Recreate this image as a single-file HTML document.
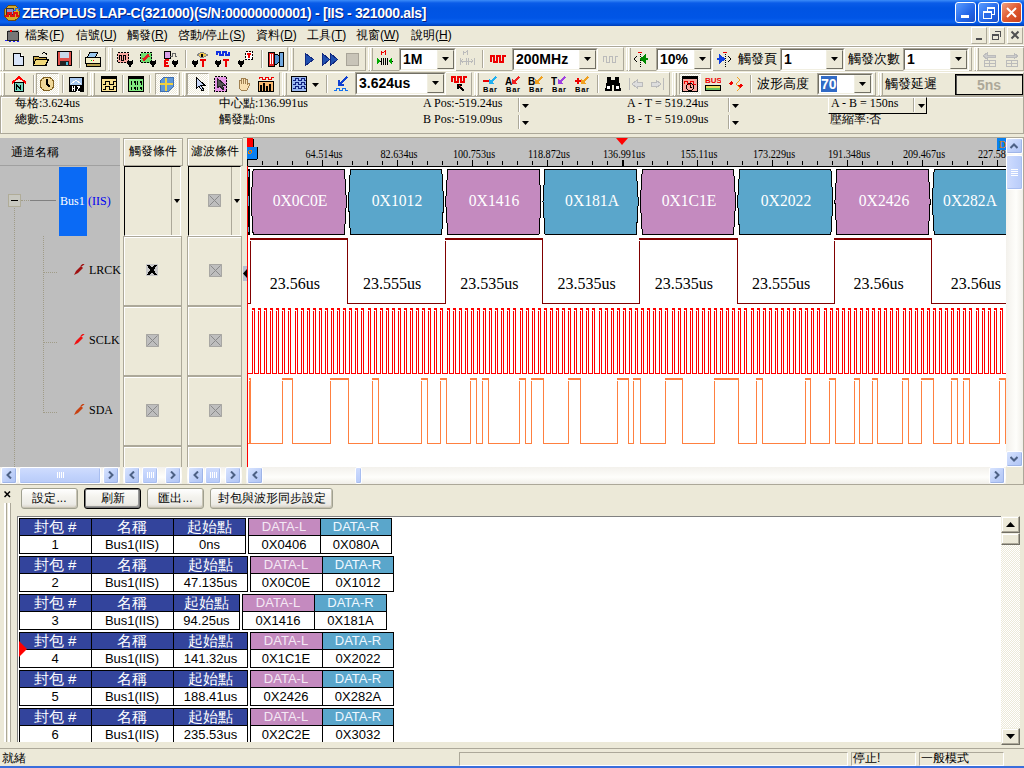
<!DOCTYPE html><html><head><meta charset="utf-8"><style>
html,body{margin:0;padding:0;width:1024px;height:768px;overflow:hidden;background:#ECE9D8;position:relative;font-family:"Liberation Sans",sans-serif;font-size:12px;color:#000}
.s{font-family:"Liberation Serif",serif}
</style></head><body>
<div style="position:absolute;left:0px;top:0px;width:1024px;height:26px;background:linear-gradient(#3C8CF8 0px,#0A5CE8 3px,#0054E3 8px,#0055E6 18px,#0A62EE 22px,#0050D8 24px,#003CB4 26px)"></div>
<svg style="position:absolute;left:3px;top:4px;" width="18" height="18" viewBox="0 0 18 18" shape-rendering="crispEdges"><circle cx="9" cy="9" r="8" fill="#D6A92A" stroke="#6B4A10"/><rect x="3" y="4" width="7" height="6" fill="#8A8FD0" stroke="#333"/><path d="M2 12h3v-3h3v3h3v-3h3v3h2" stroke="#E01010" stroke-width="2" fill="none"/><path d="M10 6h2v-2h3v2h2" stroke="#1E6AE0" fill="none"/></svg>
<div style="position:absolute;left:22px;top:5px;white-space:nowrap;color:#fff;font-weight:bold;font-size:14px;letter-spacing:-0.32px;text-shadow:1px 1px 0 #0A1E7A">ZEROPLUS LAP-C(321000)(S/N:00000000001) - [IIS - 321000.als]</div>
<div style="position:absolute;left:955px;top:2px;width:21px;height:21px;box-sizing:border-box;border:1px solid #fff;border-radius:3px;background:linear-gradient(135deg,#5A9CFF,#2366E8 60%,#1C50C8)"><div style="position:absolute;left:5px;top:12px;width:8px;height:3px;background:#fff"></div></div>
<div style="position:absolute;left:978px;top:2px;width:21px;height:21px;box-sizing:border-box;border:1px solid #fff;border-radius:3px;background:linear-gradient(135deg,#5A9CFF,#2366E8 60%,#1C50C8)"><div style="position:absolute;left:8px;top:4px;width:6px;height:5px;border:1px solid #fff;border-top-width:2px"></div><div style="position:absolute;left:4px;top:8px;width:7px;height:5px;border:1px solid #fff;border-top-width:2px;background:#2A6BE8"></div></div>
<div style="position:absolute;left:1001px;top:2px;width:21px;height:21px;box-sizing:border-box;border:1px solid #fff;border-radius:3px;background:linear-gradient(135deg,#F0A080,#E05A30 50%,#C8401C)"><svg style="position:absolute;left:4px;top:4px" width="11" height="11"><path d="M1 1L10 10M10 1L1 10" stroke="#fff" stroke-width="2"/></svg></div>
<div style="position:absolute;left:0px;top:26px;width:1024px;height:19px;background:#ECE9D8"></div>
<svg style="position:absolute;left:4px;top:28px;" width="16" height="15" viewBox="0 0 16 15" shape-rendering="crispEdges"><rect x="3" y="3" width="11" height="9" fill="#777" stroke="#222"/><path d="M4 2h10v2" stroke="#aaa"/><circle cx="7" cy="3" r="1" fill="#f00"/><path d="M1 12h2M5 13h2M9 13h2M13 13h2" stroke="#22f"/></svg>
<div style="position:absolute;left:25px;top:28px;white-space:nowrap;font-size:12px;line-height:15px">檔案(<u>F</u>)</div>
<div style="position:absolute;left:76px;top:28px;white-space:nowrap;font-size:12px;line-height:15px">信號(<u>U</u>)</div>
<div style="position:absolute;left:127px;top:28px;white-space:nowrap;font-size:12px;line-height:15px">觸發(<u>R</u>)</div>
<div style="position:absolute;left:178px;top:28px;white-space:nowrap;font-size:12px;line-height:15px">啓動/停止(<u>S</u>)</div>
<div style="position:absolute;left:256px;top:28px;white-space:nowrap;font-size:12px;line-height:15px">資料(<u>D</u>)</div>
<div style="position:absolute;left:307px;top:28px;white-space:nowrap;font-size:12px;line-height:15px">工具(<u>T</u>)</div>
<div style="position:absolute;left:356px;top:28px;white-space:nowrap;font-size:12px;line-height:15px">視窗(<u>W</u>)</div>
<div style="position:absolute;left:411px;top:28px;white-space:nowrap;font-size:12px;line-height:15px">說明(<u>H</u>)</div>
<div style="position:absolute;left:971px;top:27px;width:16px;height:17px;box-sizing:border-box;border:1px solid;border-color:#fff #ACA899 #ACA899 #fff;background:#ECE9D8"></div>
<div style="position:absolute;left:989px;top:27px;width:16px;height:17px;box-sizing:border-box;border:1px solid;border-color:#fff #ACA899 #ACA899 #fff;background:#ECE9D8"></div>
<div style="position:absolute;left:1007px;top:27px;width:16px;height:17px;box-sizing:border-box;border:1px solid;border-color:#fff #ACA899 #ACA899 #fff;background:#ECE9D8"></div>
<svg style="position:absolute;left:974px;top:30px;" width="12" height="12" viewBox="0 0 12 12" shape-rendering="crispEdges"><rect x="2" y="8" width="6" height="2" fill="#505050"/></svg>
<svg style="position:absolute;left:991px;top:30px;" width="12" height="12" viewBox="0 0 12 12" shape-rendering="crispEdges"><path d="M4.5 1.5h5v5h-1M1.5 4.5h6v5h-6z" stroke="#505050" fill="none"/><path d="M4 1.5h6M1 5h7" stroke="#505050"/></svg>
<svg style="position:absolute;left:1010px;top:30px;shape-rendering:auto" width="10" height="10" viewBox="0 0 10 10" shape-rendering="crispEdges"><path d="M1.5 1.5L8.5 8.5M8.5 1.5L1.5 8.5" stroke="#505050" stroke-width="2"/></svg>
<div style="position:absolute;left:0px;top:45px;width:1024px;height:1px;background:#fff"></div>
<div style="position:absolute;left:0px;top:46px;width:1024px;height:1px;background:#ACA899"></div>
<div style="position:absolute;left:0px;top:47px;width:106px;height:24px;box-sizing:border-box;border:1px solid;border-color:#fff #ACA899 #ACA899 #fff"></div>
<div style="position:absolute;left:2px;top:48px;width:3px;height:23px;box-sizing:border-box;border-left:1px solid #fff;border-right:1px solid #ACA899"></div>
<div style="position:absolute;left:108px;top:47px;width:180px;height:24px;box-sizing:border-box;border:1px solid;border-color:#fff #ACA899 #ACA899 #fff"></div>
<div style="position:absolute;left:110px;top:48px;width:3px;height:23px;box-sizing:border-box;border-left:1px solid #fff;border-right:1px solid #ACA899"></div>
<div style="position:absolute;left:289px;top:47px;width:77px;height:24px;box-sizing:border-box;border:1px solid;border-color:#fff #ACA899 #ACA899 #fff"></div>
<div style="position:absolute;left:291px;top:48px;width:3px;height:23px;box-sizing:border-box;border-left:1px solid #fff;border-right:1px solid #ACA899"></div>
<div style="position:absolute;left:368px;top:47px;width:256px;height:24px;box-sizing:border-box;border:1px solid;border-color:#fff #ACA899 #ACA899 #fff"></div>
<div style="position:absolute;left:370px;top:48px;width:3px;height:23px;box-sizing:border-box;border-left:1px solid #fff;border-right:1px solid #ACA899"></div>
<div style="position:absolute;left:626px;top:47px;width:346px;height:24px;box-sizing:border-box;border:1px solid;border-color:#fff #ACA899 #ACA899 #fff"></div>
<div style="position:absolute;left:628px;top:48px;width:3px;height:23px;box-sizing:border-box;border-left:1px solid #fff;border-right:1px solid #ACA899"></div>
<div style="position:absolute;left:974px;top:47px;width:50px;height:24px;box-sizing:border-box;border:1px solid;border-color:#fff #ACA899 #ACA899 #fff"></div>
<div style="position:absolute;left:976px;top:48px;width:3px;height:23px;box-sizing:border-box;border-left:1px solid #fff;border-right:1px solid #ACA899"></div>
<div style="position:absolute;left:0px;top:72px;width:88px;height:24px;box-sizing:border-box;border:1px solid;border-color:#fff #ACA899 #ACA899 #fff"></div>
<div style="position:absolute;left:2px;top:73px;width:3px;height:23px;box-sizing:border-box;border-left:1px solid #fff;border-right:1px solid #ACA899"></div>
<div style="position:absolute;left:90px;top:72px;width:90px;height:24px;box-sizing:border-box;border:1px solid;border-color:#fff #ACA899 #ACA899 #fff"></div>
<div style="position:absolute;left:92px;top:73px;width:3px;height:23px;box-sizing:border-box;border-left:1px solid #fff;border-right:1px solid #ACA899"></div>
<div style="position:absolute;left:182px;top:72px;width:98px;height:24px;box-sizing:border-box;border:1px solid;border-color:#fff #ACA899 #ACA899 #fff"></div>
<div style="position:absolute;left:184px;top:73px;width:3px;height:23px;box-sizing:border-box;border-left:1px solid #fff;border-right:1px solid #ACA899"></div>
<div style="position:absolute;left:282px;top:72px;width:190px;height:24px;box-sizing:border-box;border:1px solid;border-color:#fff #ACA899 #ACA899 #fff"></div>
<div style="position:absolute;left:284px;top:73px;width:3px;height:23px;box-sizing:border-box;border-left:1px solid #fff;border-right:1px solid #ACA899"></div>
<div style="position:absolute;left:474px;top:72px;width:196px;height:24px;box-sizing:border-box;border:1px solid;border-color:#fff #ACA899 #ACA899 #fff"></div>
<div style="position:absolute;left:476px;top:73px;width:3px;height:23px;box-sizing:border-box;border-left:1px solid #fff;border-right:1px solid #ACA899"></div>
<div style="position:absolute;left:672px;top:72px;width:204px;height:24px;box-sizing:border-box;border:1px solid;border-color:#fff #ACA899 #ACA899 #fff"></div>
<div style="position:absolute;left:674px;top:73px;width:3px;height:23px;box-sizing:border-box;border-left:1px solid #fff;border-right:1px solid #ACA899"></div>
<div style="position:absolute;left:878px;top:72px;width:146px;height:24px;box-sizing:border-box;border:1px solid;border-color:#fff #ACA899 #ACA899 #fff"></div>
<div style="position:absolute;left:880px;top:73px;width:3px;height:23px;box-sizing:border-box;border-left:1px solid #fff;border-right:1px solid #ACA899"></div>
<svg style="position:absolute;left:12px;top:53px;shape-rendering:crispEdges" width="13" height="14" viewBox="0 0 13 14" shape-rendering="crispEdges"><path d="M1.5 0.5h7l3 3v9h-10z" fill="#D8E4F8" stroke="#000"/><path d="M8.5 0.5v3h3" fill="#fff" stroke="#000"/></svg>
<svg style="position:absolute;left:33px;top:51px;shape-rendering:crispEdges" width="16" height="16" viewBox="0 0 16 16" shape-rendering="crispEdges"><path d="M0.5 5.5h5l1 1h7v8h-13z" fill="#C8A848" stroke="#000"/><path d="M2.5 8.5h13l-3 6h-12z" fill="#F0D878" stroke="#000"/><path d="M9 3q3-3 5 1" stroke="#000" fill="none"/></svg>
<svg style="position:absolute;left:57px;top:51px;shape-rendering:crispEdges" width="16" height="16" viewBox="0 0 16 16" shape-rendering="crispEdges"><rect x="0.5" y="0.5" width="14" height="14" fill="#E0504A" stroke="#000"/><rect x="3" y="1" width="9" height="6" fill="#C8D8E8"/><rect x="3" y="10" width="9" height="5" fill="#222"/><rect x="9" y="11" width="2" height="3" fill="#4AC0E0"/></svg>
<div style="position:absolute;left:79px;top:50px;width:2px;height:18px;box-sizing:border-box;border-left:1px solid #ACA899;border-right:1px solid #fff"></div>
<svg style="position:absolute;left:85px;top:51px;shape-rendering:crispEdges" width="16" height="16" viewBox="0 0 16 16" shape-rendering="crispEdges"><path d="M4.5 1.5h8l-2 5h-8z" fill="#9AC8F0" stroke="#000"/><rect x="0.5" y="6.5" width="15" height="6" fill="#F4EEC8" stroke="#000"/><rect x="1" y="12" width="14" height="3" fill="#B8A050" stroke="#000"/><rect x="6" y="9" width="1" height="1" fill="#0C0"/><rect x="8" y="9" width="1" height="1" fill="#F00"/></svg>
<svg style="position:absolute;left:117px;top:51px;shape-rendering:crispEdges" width="16" height="16" viewBox="0 0 16 16" shape-rendering="crispEdges"><rect x="0.5" y="1.5" width="11" height="10" fill="#F8A8A0" stroke="#000" stroke-dasharray="2 1"/><path d="M2 9V4h2v5h2V4h2v5" stroke="#000" fill="none"/><path d="M11 8.5v2M15 8.5v2" stroke="#000"/><path d="M10 10h6v1.5q0 2.5-3 2.5t-3-2.5z" fill="#000"/><path d="M13 13v3" stroke="#000" stroke-width="1.5"/></svg>
<svg style="position:absolute;left:140px;top:51px;shape-rendering:crispEdges" width="16" height="16" viewBox="0 0 16 16" shape-rendering="crispEdges"><rect x="0.5" y="1.5" width="11" height="10" fill="#70E070" stroke="#000" stroke-dasharray="2 1"/><path d="M3 9l6-5" stroke="#E02020" stroke-width="3"/><path d="M11 8.5v2M15 8.5v2" stroke="#000"/><path d="M10 10h6v1.5q0 2.5-3 2.5t-3-2.5z" fill="#000"/><path d="M13 13v3" stroke="#000" stroke-width="1.5"/></svg>
<svg style="position:absolute;left:162px;top:51px;shape-rendering:crispEdges" width="17" height="16" viewBox="0 0 17 16" shape-rendering="crispEdges"><rect x="2.5" y="0.5" width="6" height="7" fill="#D8A0E8" stroke="#000"/><path d="M8 5h2V2h3v3h2" stroke="#666" fill="none"/><path d="M3 9h4M3 9v6h4M3 12h3" stroke="#E00" stroke-width="1.5" fill="none"/><path d="M11 8.5v2M15 8.5v2" stroke="#000"/><path d="M10 10h6v1.5q0 2.5-3 2.5t-3-2.5z" fill="#000"/><path d="M13 13v3" stroke="#000" stroke-width="1.5"/></svg>
<div style="position:absolute;left:185px;top:50px;width:2px;height:18px;box-sizing:border-box;border-left:1px solid #ACA899;border-right:1px solid #fff"></div>
<svg style="position:absolute;left:192px;top:51px;shape-rendering:crispEdges" width="16" height="16" viewBox="0 0 16 16" shape-rendering="crispEdges"><path d="M5 4l5-3 6 3-6 3z" fill="#F0C850" stroke="#888"/><rect x="9" y="3" width="2" height="3" fill="#000"/><path d="M1 8.5v2M5 8.5v2" stroke="#000"/><path d="M0 10h6v1.5q0 2.5-3 2.5t-3-2.5z" fill="#000"/><path d="M3 13v3" stroke="#000" stroke-width="1.5"/><path d="M8 9h6M11 9v7" stroke="#E00" stroke-width="2"/></svg>
<svg style="position:absolute;left:215px;top:51px;shape-rendering:crispEdges" width="16" height="16" viewBox="0 0 16 16" shape-rendering="crispEdges"><path d="M2 4V1h3v3h3V1h3v3h3V1" stroke="#1030E0" stroke-width="1.5" fill="none"/><path d="M1 8.5v2M5 8.5v2" stroke="#000"/><path d="M0 10h6v1.5q0 2.5-3 2.5t-3-2.5z" fill="#000"/><path d="M3 13v3" stroke="#000" stroke-width="1.5"/><path d="M8 9h6M11 9v7" stroke="#E00" stroke-width="2"/></svg>
<svg style="position:absolute;left:238px;top:51px;shape-rendering:crispEdges" width="16" height="16" viewBox="0 0 16 16" shape-rendering="crispEdges"><rect x="7.5" y="0.5" width="7" height="8" fill="#fff" stroke="#000" stroke-dasharray="2 1"/><path d="M9 3h4M11 3v4" stroke="#E00" stroke-width="2"/><path d="M1 8.5v2M5 8.5v2" stroke="#000"/><path d="M0 10h6v1.5q0 2.5-3 2.5t-3-2.5z" fill="#000"/><path d="M3 13v3" stroke="#000" stroke-width="1.5"/></svg>
<div style="position:absolute;left:261px;top:50px;width:2px;height:18px;box-sizing:border-box;border-left:1px solid #ACA899;border-right:1px solid #fff"></div>
<svg style="position:absolute;left:267px;top:51px;shape-rendering:crispEdges" width="17" height="16" viewBox="0 0 17 16" shape-rendering="crispEdges"><path d="M1 1h6v14H1z" fill="#E02020" stroke="#000"/><path d="M3 3v10M5 3v10" stroke="#fff"/><path d="M7 3h3l2 2v6l-2 2H7z" fill="#5090D0" stroke="#000"/><path d="M12 1h4v14h-4z" fill="#70A8E0" stroke="#000"/></svg>
<svg style="position:absolute;left:304px;top:52px;shape-rendering:crispEdges" width="12" height="16" viewBox="0 0 12 16" shape-rendering="crispEdges"><path d="M1.5 1.5l8 6-8 6z" fill="#2050B0" stroke="#102880"/></svg>
<svg style="position:absolute;left:322px;top:52px;shape-rendering:crispEdges" width="16" height="16" viewBox="0 0 16 16" shape-rendering="crispEdges"><path d="M0.5 1.5l7 6-7 6zM8.5 1.5l7 6-7 6z" fill="#2050B0" stroke="#102880"/></svg>
<svg style="position:absolute;left:345px;top:52px;shape-rendering:crispEdges" width="14" height="16" viewBox="0 0 14 16" shape-rendering="crispEdges"><rect x="1" y="1" width="12" height="12" fill="#C8C4B8" stroke="#A8A498"/></svg>
<svg style="position:absolute;left:377px;top:50px;shape-rendering:crispEdges" width="17" height="17" viewBox="0 0 17 17" shape-rendering="crispEdges"><path d="M4 5V1l2 2 2-2v4" stroke="#E00" fill="none"/><path d="M0 11h4M4 8v7M6 8v7M8 8v7M10 8v7M16 11h-4" stroke="#000"/><path d="M0 8l4 3-4 3z" fill="#0A0"/><path d="M15 8l-4 3 4 3z" fill="#0A0"/></svg>
<div style="position:absolute;left:399px;top:48px;width:57px;height:23px;box-sizing:border-box;border:1px solid;border-color:#ACA899 #fff #fff #ACA899;background:#fff"></div>
<div style="position:absolute;left:400px;top:49px;width:55px;height:21px;box-sizing:border-box;border:1px solid;border-color:#716F64 #F1EFE2 #F1EFE2 #716F64;background:#fff"></div>
<div style="position:absolute;left:437px;top:50px;width:17px;height:19px;box-sizing:border-box;border:1px solid;border-color:#F1EFE2 #716F64 #716F64 #F1EFE2;background:#ECE9D8"></div>
<svg style="position:absolute;left:442px;top:57px;shape-rendering:auto" width="7" height="4" viewBox="0 0 7 4" shape-rendering="crispEdges"><path d="M0 0h7L3.5 4z" fill="#000"/></svg>
<div style="position:absolute;left:403px;top:51px;white-space:nowrap;font-weight:bold;font-size:14px;line-height:16px">1M</div>
<svg style="position:absolute;left:459px;top:50px;shape-rendering:crispEdges" width="17" height="17" viewBox="0 0 17 17" shape-rendering="crispEdges"><path d="M4 5V1l2 2 2-2v4" stroke="#bbb" fill="none"/><path d="M1 8v7M15 8v7M3 11h10M7 8v7M9 8v7" stroke="#bbb"/><path d="M4 9l-2 2 2 2M12 9l2 2-2 2" stroke="#bbb" fill="none"/></svg>
<div style="position:absolute;left:482px;top:50px;width:2px;height:18px;box-sizing:border-box;border-left:1px solid #ACA899;border-right:1px solid #fff"></div>
<svg style="position:absolute;left:490px;top:53px;shape-rendering:crispEdges" width="17" height="12" viewBox="0 0 17 12" shape-rendering="crispEdges"><path d="M1 9V3h3v6h3V3h3v6h3V3h3" stroke="#E00" stroke-width="1.5" fill="none"/></svg>
<div style="position:absolute;left:512px;top:48px;width:86px;height:23px;box-sizing:border-box;border:1px solid;border-color:#ACA899 #fff #fff #ACA899;background:#fff"></div>
<div style="position:absolute;left:513px;top:49px;width:84px;height:21px;box-sizing:border-box;border:1px solid;border-color:#716F64 #F1EFE2 #F1EFE2 #716F64;background:#fff"></div>
<div style="position:absolute;left:579px;top:50px;width:17px;height:19px;box-sizing:border-box;border:1px solid;border-color:#F1EFE2 #716F64 #716F64 #F1EFE2;background:#ECE9D8"></div>
<svg style="position:absolute;left:584px;top:57px;shape-rendering:auto" width="7" height="4" viewBox="0 0 7 4" shape-rendering="crispEdges"><path d="M0 0h7L3.5 4z" fill="#000"/></svg>
<div style="position:absolute;left:516px;top:51px;white-space:nowrap;font-weight:bold;font-size:14px;line-height:16px">200MHz</div>
<svg style="position:absolute;left:602px;top:53px;shape-rendering:crispEdges" width="17" height="12" viewBox="0 0 17 12" shape-rendering="crispEdges"><path d="M1 9V3h3v6h3V3h3v6h3V3h3" stroke="#bbb" fill="none"/></svg>
<svg style="position:absolute;left:633px;top:51px;shape-rendering:crispEdges" width="17" height="16" viewBox="0 0 17 16" shape-rendering="crispEdges"><path d="M7 1v15" stroke="#000" stroke-dasharray="1 1"/><path d="M5 1h4" stroke="#E00"/><path d="M15 8H9M12 5l-4 3 4 3z" fill="#0C0" stroke="#080" stroke-width="2"/><path d="M1 8l3-3M1 8l3 3" stroke="#000"/></svg>
<div style="position:absolute;left:656px;top:48px;width:57px;height:23px;box-sizing:border-box;border:1px solid;border-color:#ACA899 #fff #fff #ACA899;background:#fff"></div>
<div style="position:absolute;left:657px;top:49px;width:55px;height:21px;box-sizing:border-box;border:1px solid;border-color:#716F64 #F1EFE2 #F1EFE2 #716F64;background:#fff"></div>
<div style="position:absolute;left:694px;top:50px;width:17px;height:19px;box-sizing:border-box;border:1px solid;border-color:#F1EFE2 #716F64 #716F64 #F1EFE2;background:#ECE9D8"></div>
<svg style="position:absolute;left:699px;top:57px;shape-rendering:auto" width="7" height="4" viewBox="0 0 7 4" shape-rendering="crispEdges"><path d="M0 0h7L3.5 4z" fill="#000"/></svg>
<div style="position:absolute;left:660px;top:51px;white-space:nowrap;font-weight:bold;font-size:14px;line-height:16px">10%</div>
<svg style="position:absolute;left:716px;top:51px;shape-rendering:crispEdges" width="17" height="16" viewBox="0 0 17 16" shape-rendering="crispEdges"><path d="M9 1v15" stroke="#000" stroke-dasharray="1 1"/><path d="M7 1h4" stroke="#E00"/><path d="M1 8h6M4 5l4 3-4 3z" fill="#1040E0" stroke="#1040E0" stroke-width="2"/><path d="M15 8l-3-3M15 8l-3 3" stroke="#000"/></svg>
<div style="position:absolute;left:738px;top:50px;white-space:nowrap;font-size:13px;line-height:18px">觸發頁</div>
<div style="position:absolute;left:780px;top:48px;width:65px;height:23px;box-sizing:border-box;border:1px solid;border-color:#ACA899 #fff #fff #ACA899;background:#fff"></div>
<div style="position:absolute;left:781px;top:49px;width:63px;height:21px;box-sizing:border-box;border:1px solid;border-color:#716F64 #F1EFE2 #F1EFE2 #716F64;background:#fff"></div>
<div style="position:absolute;left:826px;top:50px;width:17px;height:19px;box-sizing:border-box;border:1px solid;border-color:#F1EFE2 #716F64 #716F64 #F1EFE2;background:#ECE9D8"></div>
<svg style="position:absolute;left:831px;top:57px;shape-rendering:auto" width="7" height="4" viewBox="0 0 7 4" shape-rendering="crispEdges"><path d="M0 0h7L3.5 4z" fill="#000"/></svg>
<div style="position:absolute;left:784px;top:51px;white-space:nowrap;font-weight:bold;font-size:14px;line-height:16px">1</div>
<div style="position:absolute;left:848px;top:50px;white-space:nowrap;font-size:13px;line-height:18px">觸發次數</div>
<div style="position:absolute;left:903px;top:48px;width:66px;height:23px;box-sizing:border-box;border:1px solid;border-color:#ACA899 #fff #fff #ACA899;background:#fff"></div>
<div style="position:absolute;left:904px;top:49px;width:64px;height:21px;box-sizing:border-box;border:1px solid;border-color:#716F64 #F1EFE2 #F1EFE2 #716F64;background:#fff"></div>
<div style="position:absolute;left:950px;top:50px;width:17px;height:19px;box-sizing:border-box;border:1px solid;border-color:#F1EFE2 #716F64 #716F64 #F1EFE2;background:#ECE9D8"></div>
<svg style="position:absolute;left:955px;top:57px;shape-rendering:auto" width="7" height="4" viewBox="0 0 7 4" shape-rendering="crispEdges"><path d="M0 0h7L3.5 4z" fill="#000"/></svg>
<div style="position:absolute;left:907px;top:51px;white-space:nowrap;font-weight:bold;font-size:14px;line-height:16px">1</div>
<svg style="position:absolute;left:981px;top:51px;shape-rendering:crispEdges" width="17" height="16" viewBox="0 0 17 16" shape-rendering="crispEdges"><path d="M3 15V9h11v6zM8.5 9v6M3 12h11" stroke="#bbb" fill="none"/><path d="M2 5l4-3v2h8v2H6v2z" fill="#ccc" stroke="#bbb"/></svg>
<svg style="position:absolute;left:1003px;top:51px;shape-rendering:crispEdges" width="17" height="16" viewBox="0 0 17 16" shape-rendering="crispEdges"><path d="M3 15V9h11v6zM8.5 9v6M3 12h11" stroke="#bbb" fill="none"/><path d="M15 5l-4-3v2H3v2h8v2z" fill="#ccc" stroke="#bbb"/></svg>
<svg style="position:absolute;left:11px;top:76px;shape-rendering:crispEdges" width="16" height="16" viewBox="0 0 16 16" shape-rendering="crispEdges"><path d="M1 7L8 1l7 6" stroke="#F00" stroke-width="2" fill="none"/><rect x="3.5" y="6.5" width="9" height="9" fill="#70D8C0" stroke="#000"/><path d="M5.5 13.5v-5l4 5v-5" stroke="#000" fill="none"/></svg>
<div style="position:absolute;left:33px;top:75px;width:2px;height:18px;box-sizing:border-box;border-left:1px solid #ACA899;border-right:1px solid #fff"></div>
<div style="position:absolute;left:36px;top:73px;width:23px;height:22px;box-sizing:border-box;border:1px solid;border-color:#ACA899 #fff #fff #ACA899;background:repeating-conic-gradient(#fff 0 25%,#ECE9D8 0 50%) 0 0/2px 2px"></div>
<svg style="position:absolute;left:39px;top:76px;shape-rendering:crispEdges" width="16" height="16" viewBox="0 0 16 16" shape-rendering="crispEdges"><circle cx="8" cy="8" r="7" fill="#F0D898" stroke="#806020"/><path d="M8 3v5l3 3" stroke="#000" stroke-width="1.5" fill="none"/></svg>
<div style="position:absolute;left:62px;top:75px;width:2px;height:18px;box-sizing:border-box;border-left:1px solid #ACA899;border-right:1px solid #fff"></div>
<svg style="position:absolute;left:68px;top:76px;shape-rendering:crispEdges" width="16" height="16" viewBox="0 0 16 16" shape-rendering="crispEdges"><rect x="0.5" y="0.5" width="15" height="15" fill="#000"/><rect x="2" y="2" width="12" height="7" fill="#A8C8F0"/><path d="M3 8l5-4 5 4" stroke="#fff" fill="none"/><path d="M4 10v5M4 12h2M6 10v5M9 10h3l-3 5h3" stroke="#fff"/></svg>
<svg style="position:absolute;left:101px;top:76px;shape-rendering:crispEdges" width="16" height="16" viewBox="0 0 16 16" shape-rendering="crispEdges"><rect x="0.5" y="0.5" width="15" height="15" fill="#F8E090" stroke="#000"/><rect x="0" y="0" width="16" height="3" fill="#000"/><path d="M2 8h2V5h4v3h4V5h3M2 13h2v-3h4v3h4v-3h3" stroke="#000" fill="none"/></svg>
<div style="position:absolute;left:122px;top:75px;width:2px;height:18px;box-sizing:border-box;border-left:1px solid #ACA899;border-right:1px solid #fff"></div>
<svg style="position:absolute;left:128px;top:76px;shape-rendering:crispEdges" width="16" height="16" viewBox="0 0 16 16" shape-rendering="crispEdges"><rect x="0.5" y="0.5" width="15" height="15" fill="#80E880" stroke="#000"/><rect x="0" y="0" width="16" height="3" fill="#000"/><path d="M3 5v4M6 5h1v4M9 5v4M12 5h1v4M3 11v3M6 11h1v3M9 11v3M12 11h1v3" stroke="#000"/></svg>
<div style="position:absolute;left:149px;top:75px;width:2px;height:18px;box-sizing:border-box;border-left:1px solid #ACA899;border-right:1px solid #fff"></div>
<div style="position:absolute;left:155px;top:73px;width:23px;height:22px;box-sizing:border-box;border:1px solid;border-color:#ACA899 #fff #fff #ACA899;background:repeating-conic-gradient(#fff 0 25%,#ECE9D8 0 50%) 0 0/2px 2px"></div>
<svg style="position:absolute;left:158px;top:76px;shape-rendering:crispEdges" width="16" height="16" viewBox="0 0 16 16" shape-rendering="crispEdges"><path d="M2 5l4-4h9v10l-4 4H2z" fill="#6098D8" stroke="#4070B0"/><path d="M8 2v13M2 8h13" stroke="#F0D040" stroke-width="2"/></svg>
<div style="position:absolute;left:187px;top:73px;width:22px;height:22px;box-sizing:border-box;border:1px solid;border-color:#ACA899 #fff #fff #ACA899;background:repeating-conic-gradient(#fff 0 25%,#ECE9D8 0 50%) 0 0/2px 2px"></div>
<svg style="position:absolute;left:193px;top:76px;shape-rendering:crispEdges" width="16" height="16" viewBox="0 0 16 16" shape-rendering="crispEdges"><path d="M3.5 1.5v11l2.5-2.5 3 5 2-1-3-4.5h4z" fill="#C8D8F8" stroke="#000"/></svg>
<svg style="position:absolute;left:213px;top:76px;shape-rendering:crispEdges" width="16" height="16" viewBox="0 0 16 16" shape-rendering="crispEdges"><rect x="1.5" y="0.5" width="12" height="15" fill="#E898E8" stroke="#000" stroke-dasharray="2 1"/><path d="M4 2v10l3-2 3 4 1-1-2-4h3z" fill="#555" stroke="#222"/></svg>
<svg style="position:absolute;left:236px;top:76px;shape-rendering:crispEdges" width="16" height="16" viewBox="0 0 16 16" shape-rendering="crispEdges"><path d="M3 8V4h2v4V2h2v6V2h2v6V3h2v6l2-2 1 1-3 6H5L3 12z" fill="#F8E0B0" stroke="#A08050"/></svg>
<svg style="position:absolute;left:258px;top:76px;shape-rendering:crispEdges" width="16" height="16" viewBox="0 0 16 16" shape-rendering="crispEdges"><path d="M1 3V1h3v2h3V1h3v2h3V1h3" stroke="#E00" fill="none"/><rect x="0.5" y="5.5" width="15" height="10" fill="#F8B870" stroke="#000"/><path d="M3 15V9M6 15V7M9 15v-5M12 15V8" stroke="#000" stroke-width="1.5"/></svg>
<svg style="position:absolute;left:291px;top:76px;shape-rendering:crispEdges" width="16" height="16" viewBox="0 0 16 16" shape-rendering="crispEdges"><rect x="0.5" y="0.5" width="15" height="15" fill="#9AB8F0" stroke="#000"/><path d="M2 4h2V2h3v2h3V2h3v2h2M2 8h2V6h3v2h3V6h3v2h2M2 12h2v-2h3v2h3v-2h3v2h2" stroke="#102080" fill="none"/></svg>
<svg style="position:absolute;left:312px;top:83px;shape-rendering:auto" width="7" height="4" viewBox="0 0 7 4" shape-rendering="crispEdges"><path d="M0 0h7L3.5 4z" fill="#000"/></svg>
<div style="position:absolute;left:326px;top:75px;width:2px;height:18px;box-sizing:border-box;border-left:1px solid #ACA899;border-right:1px solid #fff"></div>
<svg style="position:absolute;left:333px;top:76px;shape-rendering:crispEdges" width="16" height="16" viewBox="0 0 16 16" shape-rendering="crispEdges"><path d="M14 1L6 9M6 4v5h5" stroke="#1040D0" stroke-width="2" fill="none"/><path d="M1 14h2v-2h3v2h3v-2h3v2h3" stroke="#1070F0" fill="none"/></svg>
<div style="position:absolute;left:355px;top:72px;width:91px;height:23px;box-sizing:border-box;border:1px solid;border-color:#ACA899 #fff #fff #ACA899;background:#fff"></div>
<div style="position:absolute;left:356px;top:73px;width:89px;height:21px;box-sizing:border-box;border:1px solid;border-color:#716F64 #F1EFE2 #F1EFE2 #716F64;background:#fff"></div>
<div style="position:absolute;left:427px;top:74px;width:17px;height:19px;box-sizing:border-box;border:1px solid;border-color:#F1EFE2 #716F64 #716F64 #F1EFE2;background:#ECE9D8"></div>
<svg style="position:absolute;left:432px;top:81px;shape-rendering:auto" width="7" height="4" viewBox="0 0 7 4" shape-rendering="crispEdges"><path d="M0 0h7L3.5 4z" fill="#000"/></svg>
<div style="position:absolute;left:359px;top:75px;white-space:nowrap;font-weight:bold;font-size:14px;line-height:16px">3.624us</div>
<svg style="position:absolute;left:451px;top:76px;shape-rendering:crispEdges" width="16" height="16" viewBox="0 0 16 16" shape-rendering="crispEdges"><path d="M1 6V1h3v5h3V1h3v5h3V1h3" stroke="#E00" stroke-width="1.5" fill="none"/><path d="M13 15L7 9M7 13V9h4" stroke="#000" stroke-width="2" fill="none"/><path d="M8 9l2 2" stroke="#E00"/></svg>
<svg style="position:absolute;left:482px;top:76px;shape-rendering:crispEdges" width="16" height="17" viewBox="0 0 16 17" shape-rendering="crispEdges"><path d="M1 5h6" stroke="#E00" stroke-width="2"/><path d="M14 1L8.5 6.5" stroke="#20B0F0" stroke-width="2.2"/><path d="M7 3v5h5z" fill="#20B0F0"/><text x="1" y="16" font-family="Liberation Sans" font-weight="bold" font-size="7.5" fill="#000" textLength="14">Bar</text></svg>
<svg style="position:absolute;left:505px;top:76px;shape-rendering:crispEdges" width="16" height="17" viewBox="0 0 16 17" shape-rendering="crispEdges"><text x="0" y="9" font-family="Liberation Sans" font-weight="bold" font-size="10" fill="#000">A</text><path d="M14 1L8.5 6.5" stroke="#F02020" stroke-width="2.2"/><path d="M7 3v5h5z" fill="#F02020"/><text x="1" y="16" font-family="Liberation Sans" font-weight="bold" font-size="7.5" fill="#000" textLength="14">Bar</text></svg>
<svg style="position:absolute;left:528px;top:76px;shape-rendering:crispEdges" width="16" height="17" viewBox="0 0 16 17" shape-rendering="crispEdges"><text x="0" y="9" font-family="Liberation Sans" font-weight="bold" font-size="10" fill="#000">B</text><path d="M14 1L8.5 6.5" stroke="#F0A020" stroke-width="2.2"/><path d="M7 3v5h5z" fill="#F0A020"/><text x="1" y="16" font-family="Liberation Sans" font-weight="bold" font-size="7.5" fill="#000" textLength="14">Bar</text></svg>
<svg style="position:absolute;left:551px;top:76px;shape-rendering:crispEdges" width="16" height="17" viewBox="0 0 16 17" shape-rendering="crispEdges"><text x="0" y="9" font-family="Liberation Sans" font-weight="bold" font-size="10" fill="#000">T</text><path d="M14 1L8.5 6.5" stroke="#A040E0" stroke-width="2.2"/><path d="M7 3v5h5z" fill="#A040E0"/><text x="1" y="16" font-family="Liberation Sans" font-weight="bold" font-size="7.5" fill="#000" textLength="14">Bar</text></svg>
<svg style="position:absolute;left:574px;top:76px;shape-rendering:crispEdges" width="16" height="17" viewBox="0 0 16 17" shape-rendering="crispEdges"><path d="M1 5h6M4 2v6" stroke="#E00" stroke-width="2"/><path d="M14 1L8.5 6.5" stroke="#F0A020" stroke-width="2.2"/><path d="M7 3v5h5z" fill="#F0A020"/><text x="1" y="16" font-family="Liberation Sans" font-weight="bold" font-size="7.5" fill="#000" textLength="14">Bar</text></svg>
<div style="position:absolute;left:597px;top:75px;width:2px;height:18px;box-sizing:border-box;border-left:1px solid #ACA899;border-right:1px solid #fff"></div>
<svg style="position:absolute;left:605px;top:76px;shape-rendering:crispEdges" width="16" height="16" viewBox="0 0 16 16" shape-rendering="crispEdges"><path d="M2 1h4v3h4V1h4v3l2 11H9V9H7v6H0L2 4z" fill="#000"/><rect x="2" y="10" width="3" height="3" fill="#fff"/><rect x="11" y="10" width="3" height="3" fill="#fff"/></svg>
<svg style="position:absolute;left:628px;top:76px;shape-rendering:crispEdges" width="15" height="16" viewBox="0 0 15 16" shape-rendering="crispEdges"><path d="M1.5 2v12" stroke="#bbb"/><path d="M4 8l5-4v2h5v4H9v2z" fill="#ddd" stroke="#bbb"/></svg>
<svg style="position:absolute;left:650px;top:76px;shape-rendering:crispEdges" width="15" height="16" viewBox="0 0 15 16" shape-rendering="crispEdges"><path d="M13.5 2v12" stroke="#bbb"/><path d="M11 8L6 4v2H1v4h5v2z" fill="#ddd" stroke="#bbb"/></svg>
<div style="position:absolute;left:679px;top:73px;width:22px;height:22px;box-sizing:border-box;border:1px solid;border-color:#ACA899 #fff #fff #ACA899;background:repeating-conic-gradient(#fff 0 25%,#ECE9D8 0 50%) 0 0/2px 2px"></div>
<svg style="position:absolute;left:682px;top:76px;shape-rendering:crispEdges" width="16" height="16" viewBox="0 0 16 16" shape-rendering="crispEdges"><rect x="0.5" y="0.5" width="15" height="15" fill="#F8A8A0" stroke="#000"/><rect x="0" y="0" width="16" height="3" fill="#000"/><path d="M2 8V5h3v3h3V5h3v3h3" stroke="#E00" fill="none"/><circle cx="8" cy="11" r="3.5" fill="none" stroke="#000"/><path d="M8 9v2h2" stroke="#000" fill="none"/></svg>
<svg style="position:absolute;left:705px;top:76px;shape-rendering:crispEdges" width="16" height="16" viewBox="0 0 16 16" shape-rendering="crispEdges"><text x="0" y="7" font-family="Liberation Sans" font-weight="bold" font-size="8" fill="#E00">BUS</text><rect x="0.5" y="9.5" width="15" height="5" fill="#F0E060" stroke="#000"/><rect x="1" y="12" width="14" height="2" fill="#60C060"/></svg>
<svg style="position:absolute;left:728px;top:76px;shape-rendering:crispEdges" width="16" height="16" viewBox="0 0 16 16" shape-rendering="crispEdges"><path d="M9 1l3 3-4 4 4 4-3 3" stroke="#F0A020" fill="none"/><path d="M1 7l2-2 2 2-2 3zM10 9l3-1 2 1-3 3z" fill="#E00"/></svg>
<div style="position:absolute;left:750px;top:75px;width:2px;height:18px;box-sizing:border-box;border-left:1px solid #ACA899;border-right:1px solid #fff"></div>
<div style="position:absolute;left:757px;top:75px;white-space:nowrap;font-size:13px;line-height:18px">波形高度</div>
<div style="position:absolute;left:817px;top:73px;width:56px;height:22px;box-sizing:border-box;border:1px solid;border-color:#ACA899 #fff #fff #ACA899;background:#fff"></div>
<div style="position:absolute;left:818px;top:74px;width:54px;height:20px;box-sizing:border-box;border:1px solid;border-color:#716F64 #F1EFE2 #F1EFE2 #716F64;background:#fff"></div>
<div style="position:absolute;left:854px;top:75px;width:17px;height:18px;box-sizing:border-box;border:1px solid;border-color:#F1EFE2 #716F64 #716F64 #F1EFE2;background:#ECE9D8"></div>
<svg style="position:absolute;left:859px;top:82px;shape-rendering:auto" width="7" height="4" viewBox="0 0 7 4" shape-rendering="crispEdges"><path d="M0 0h7L3.5 4z" fill="#000"/></svg>
<div style="position:absolute;left:821px;top:76px;white-space:nowrap;font-weight:bold;font-size:14px;line-height:16px"><span style="background:#316AC5;color:#fff">70</span></div>
<div style="position:absolute;left:885px;top:75px;white-space:nowrap;font-size:13px;line-height:18px">觸發延遲</div>
<div style="position:absolute;left:955px;top:74px;width:68px;height:21px;box-sizing:border-box;border:1px solid #000;box-shadow:inset 1px 1px 0 #555;background:#ECE9D8"></div>
<div style="position:absolute;left:955px;top:75px;white-space:nowrap;width:68px;text-align:center;font-weight:bold;font-size:14px;line-height:20px;color:#ACA899">5ns</div>
<div style="position:absolute;left:0px;top:96px;width:1024px;height:38px;box-sizing:border-box;border:1px solid;border-color:#ACA899 #ACA899 #ACA899 #ACA899;box-shadow:inset 1px 1px 0 #fff"></div>
<div style="position:absolute;left:15px;top:96px;white-space:nowrap;font-family:'Liberation Serif',serif;font-size:12px;line-height:15px">每格:3.624us</div>
<div style="position:absolute;left:15px;top:112px;white-space:nowrap;font-family:'Liberation Serif',serif;font-size:12px;line-height:15px">總數:5.243ms</div>
<div style="position:absolute;left:219px;top:96px;white-space:nowrap;font-family:'Liberation Serif',serif;font-size:12px;line-height:15px">中心點:136.991us</div>
<div style="position:absolute;left:219px;top:112px;white-space:nowrap;font-family:'Liberation Serif',serif;font-size:12px;line-height:15px">觸發點:0ns</div>
<div style="position:absolute;left:423px;top:96px;white-space:nowrap;font-family:'Liberation Serif',serif;font-size:12px;line-height:15px">A Pos:-519.24us</div>
<div style="position:absolute;left:423px;top:112px;white-space:nowrap;font-family:'Liberation Serif',serif;font-size:12px;line-height:15px">B Pos:-519.09us</div>
<div style="position:absolute;left:627px;top:96px;white-space:nowrap;font-family:'Liberation Serif',serif;font-size:12px;line-height:15px">A - T = 519.24us</div>
<div style="position:absolute;left:627px;top:112px;white-space:nowrap;font-family:'Liberation Serif',serif;font-size:12px;line-height:15px">B - T = 519.09us</div>
<div style="position:absolute;left:518px;top:98px;width:2px;height:14px;box-sizing:border-box;border-left:1px solid #ACA899;border-right:1px solid #fff"></div>
<div style="position:absolute;left:518px;top:115px;width:2px;height:14px;box-sizing:border-box;border-left:1px solid #ACA899;border-right:1px solid #fff"></div>
<svg style="position:absolute;left:522px;top:104px;shape-rendering:auto" width="7" height="4" viewBox="0 0 7 4" shape-rendering="crispEdges"><path d="M0 0h7L3.5 4z"/></svg>
<svg style="position:absolute;left:522px;top:121px;shape-rendering:auto" width="7" height="4" viewBox="0 0 7 4" shape-rendering="crispEdges"><path d="M0 0h7L3.5 4z"/></svg>
<div style="position:absolute;left:728px;top:98px;width:2px;height:14px;box-sizing:border-box;border-left:1px solid #ACA899;border-right:1px solid #fff"></div>
<div style="position:absolute;left:728px;top:115px;width:2px;height:14px;box-sizing:border-box;border-left:1px solid #ACA899;border-right:1px solid #fff"></div>
<svg style="position:absolute;left:732px;top:104px;shape-rendering:auto" width="7" height="4" viewBox="0 0 7 4" shape-rendering="crispEdges"><path d="M0 0h7L3.5 4z"/></svg>
<svg style="position:absolute;left:732px;top:121px;shape-rendering:auto" width="7" height="4" viewBox="0 0 7 4" shape-rendering="crispEdges"><path d="M0 0h7L3.5 4z"/></svg>
<div style="position:absolute;left:828px;top:97px;width:99px;height:17px;box-sizing:border-box;border:1px solid;border-color:#fff #000 #000 #fff"></div>
<div style="position:absolute;left:913px;top:98px;width:2px;height:14px;box-sizing:border-box;border-left:1px solid #ACA899;border-right:1px solid #fff"></div>
<svg style="position:absolute;left:918px;top:104px;shape-rendering:auto" width="7" height="4" viewBox="0 0 7 4" shape-rendering="crispEdges"><path d="M0 0h7L3.5 4z"/></svg>
<div style="position:absolute;left:831px;top:96px;white-space:nowrap;font-family:'Liberation Serif',serif;font-size:12px;line-height:15px">A - B = 150ns</div>
<div style="position:absolute;left:830px;top:112px;white-space:nowrap;font-family:'Liberation Serif',serif;font-size:12px;line-height:15px">壓縮率:否</div>
<div style="position:absolute;left:0px;top:138px;width:120px;height:329px;background:#BEBEBE"></div>
<div style="position:absolute;left:0px;top:165px;width:120px;height:1px;background:#A0A0A0"></div>
<div style="position:absolute;left:11px;top:144px;white-space:nowrap;font-size:12px;line-height:16px">通道名稱</div>
<div style="position:absolute;left:14px;top:206px;width:1px;height:261px;border-left:1px dotted #A09C88"></div>
<div style="position:absolute;left:43px;top:236px;width:1px;height:175px;border-left:1px dotted #A09C88"></div>
<div style="position:absolute;left:43px;top:272px;width:14px;height:1px;border-top:1px dotted #A09C88"></div>
<div style="position:absolute;left:43px;top:342px;width:14px;height:1px;border-top:1px dotted #A09C88"></div>
<div style="position:absolute;left:43px;top:412px;width:14px;height:1px;border-top:1px dotted #A09C88"></div>
<div style="position:absolute;left:21px;top:200px;width:8px;height:1px;border-top:1px dotted #A09C88"></div>
<div style="position:absolute;left:8px;top:194px;width:13px;height:13px;box-sizing:border-box;border:1px solid #B0AC98;background:#C8C8C0"></div>
<div style="position:absolute;left:11px;top:200px;width:7px;height:1px;background:#000"></div>
<div style="position:absolute;left:30px;top:200px;width:26px;height:1px;background:#808080"></div>
<div style="position:absolute;left:59px;top:167px;width:28px;height:69px;background:#0A6AF5"></div>
<div style="position:absolute;left:60px;top:193px;white-space:nowrap;font-family:'Liberation Serif',serif;font-size:12px;color:#fff;line-height:16px">Bus1</div>
<div style="position:absolute;left:88px;top:193px;white-space:nowrap;font-family:'Liberation Serif',serif;font-size:12px;color:#0000F0;line-height:16px">(IIS)</div>
<svg style="position:absolute;left:73px;top:264px;shape-rendering:auto" width="12" height="12" viewBox="0 0 12 12" shape-rendering="crispEdges"><path d="M1 11l2-4 5-5 2 2-5 5z" fill="#A01010"/><path d="M8 2l3-2" stroke="#A01010" stroke-width="1.5"/></svg>
<div style="position:absolute;left:89px;top:262px;white-space:nowrap;font-family:'Liberation Serif',serif;font-size:12px;line-height:16px">LRCK</div>
<svg style="position:absolute;left:73px;top:334px;shape-rendering:auto" width="12" height="12" viewBox="0 0 12 12" shape-rendering="crispEdges"><path d="M1 11l2-4 5-5 2 2-5 5z" fill="#F01010"/><path d="M8 2l3-2" stroke="#F01010" stroke-width="1.5"/></svg>
<div style="position:absolute;left:89px;top:332px;white-space:nowrap;font-family:'Liberation Serif',serif;font-size:12px;line-height:16px">SCLK</div>
<svg style="position:absolute;left:73px;top:404px;shape-rendering:auto" width="12" height="12" viewBox="0 0 12 12" shape-rendering="crispEdges"><path d="M1 11l2-4 5-5 2 2-5 5z" fill="#C84010"/><path d="M8 2l3-2" stroke="#C84010" stroke-width="1.5"/></svg>
<div style="position:absolute;left:89px;top:402px;white-space:nowrap;font-family:'Liberation Serif',serif;font-size:12px;line-height:16px">SDA</div>
<div style="position:absolute;left:123px;top:138px;width:60px;height:28px;box-sizing:border-box;border:1px solid #ACA899;border-right-color:#ACA899;box-shadow:inset 1px 1px 0 #fff"></div>
<div style="position:absolute;left:123px;top:143px;white-space:nowrap;width:60px;text-align:center;font-size:12px;line-height:16px">觸發條件</div>
<div style="position:absolute;left:187px;top:138px;width:56px;height:28px;box-sizing:border-box;border:1px solid #ACA899;border-right-color:#ACA899;box-shadow:inset 1px 1px 0 #fff"></div>
<div style="position:absolute;left:187px;top:143px;white-space:nowrap;width:56px;text-align:center;font-size:12px;line-height:16px">濾波條件</div>
<div style="position:absolute;left:124px;top:166px;width:57px;height:70px;box-sizing:border-box;border:1px solid;border-color:#000 #fff #fff #000;background:#ECE9D8"></div>
<div style="position:absolute;left:171px;top:167px;width:1px;height:68px;background:#ACA899"></div>
<svg style="position:absolute;left:174px;top:199px;shape-rendering:auto" width="6" height="4" viewBox="0 0 6 4" shape-rendering="crispEdges"><path d="M0 0h6L3 4z"/></svg>
<div style="position:absolute;left:123px;top:236px;width:59px;height:70px;box-sizing:border-box;border:1px solid #ACA899;box-shadow:inset 1px 1px 0 #fff"></div>
<div style="position:absolute;left:123px;top:306px;width:59px;height:70px;box-sizing:border-box;border:1px solid #ACA899;box-shadow:inset 1px 1px 0 #fff"></div>
<div style="position:absolute;left:123px;top:376px;width:59px;height:70px;box-sizing:border-box;border:1px solid #ACA899;box-shadow:inset 1px 1px 0 #fff"></div>
<div style="position:absolute;left:123px;top:446px;width:59px;height:21px;box-sizing:border-box;border:1px solid #ACA899;box-shadow:inset 1px 1px 0 #fff;border-bottom:0"></div>
<div style="position:absolute;left:188px;top:166px;width:53px;height:70px;box-sizing:border-box;border:1px solid;border-color:#000 #fff #fff #000;background:#ECE9D8"></div>
<div style="position:absolute;left:231px;top:167px;width:1px;height:68px;background:#ACA899"></div>
<svg style="position:absolute;left:234px;top:199px;shape-rendering:auto" width="6" height="4" viewBox="0 0 6 4" shape-rendering="crispEdges"><path d="M0 0h6L3 4z"/></svg>
<div style="position:absolute;left:187px;top:236px;width:55px;height:70px;box-sizing:border-box;border:1px solid #ACA899;box-shadow:inset 1px 1px 0 #fff"></div>
<div style="position:absolute;left:187px;top:306px;width:55px;height:70px;box-sizing:border-box;border:1px solid #ACA899;box-shadow:inset 1px 1px 0 #fff"></div>
<div style="position:absolute;left:187px;top:376px;width:55px;height:70px;box-sizing:border-box;border:1px solid #ACA899;box-shadow:inset 1px 1px 0 #fff"></div>
<div style="position:absolute;left:187px;top:446px;width:55px;height:21px;box-sizing:border-box;border:1px solid #ACA899;box-shadow:inset 1px 1px 0 #fff;border-bottom:0"></div>
<svg style="position:absolute;left:208px;top:194px;shape-rendering:auto" width="13" height="13" viewBox="0 0 13 13" shape-rendering="crispEdges"><rect x="0.5" y="0.5" width="12" height="12" fill="#BEBEBE" stroke="#7A7A7A" stroke-dasharray="1 1"/><path d="M1.5 1.5L11.5 11.5M11.5 1.5L1.5 11.5" stroke="#8A8A8A"/></svg>
<svg style="position:absolute;left:146px;top:264px;" width="12" height="12" viewBox="0 0 12 12" shape-rendering="crispEdges"><rect x="0" y="0" width="12" height="12" fill="#C8C8C8"/><path d="M1 1h3l2 3 2-3h3l-3 5 3 5H8L6 8l-2 3H1l3-5z" fill="#000"/></svg>
<svg style="position:absolute;left:209px;top:264px;shape-rendering:auto" width="13" height="13" viewBox="0 0 13 13" shape-rendering="crispEdges"><rect x="0.5" y="0.5" width="12" height="12" fill="#BEBEBE" stroke="#7A7A7A" stroke-dasharray="1 1"/><path d="M1.5 1.5L11.5 11.5M11.5 1.5L1.5 11.5" stroke="#8A8A8A"/></svg>
<svg style="position:absolute;left:146px;top:334px;shape-rendering:auto" width="13" height="13" viewBox="0 0 13 13" shape-rendering="crispEdges"><rect x="0.5" y="0.5" width="12" height="12" fill="#BEBEBE" stroke="#7A7A7A" stroke-dasharray="1 1"/><path d="M1.5 1.5L11.5 11.5M11.5 1.5L1.5 11.5" stroke="#8A8A8A"/></svg>
<svg style="position:absolute;left:209px;top:334px;shape-rendering:auto" width="13" height="13" viewBox="0 0 13 13" shape-rendering="crispEdges"><rect x="0.5" y="0.5" width="12" height="12" fill="#BEBEBE" stroke="#7A7A7A" stroke-dasharray="1 1"/><path d="M1.5 1.5L11.5 11.5M11.5 1.5L1.5 11.5" stroke="#8A8A8A"/></svg>
<svg style="position:absolute;left:146px;top:404px;shape-rendering:auto" width="13" height="13" viewBox="0 0 13 13" shape-rendering="crispEdges"><rect x="0.5" y="0.5" width="12" height="12" fill="#BEBEBE" stroke="#7A7A7A" stroke-dasharray="1 1"/><path d="M1.5 1.5L11.5 11.5M11.5 1.5L1.5 11.5" stroke="#8A8A8A"/></svg>
<svg style="position:absolute;left:209px;top:404px;shape-rendering:auto" width="13" height="13" viewBox="0 0 13 13" shape-rendering="crispEdges"><rect x="0.5" y="0.5" width="12" height="12" fill="#BEBEBE" stroke="#7A7A7A" stroke-dasharray="1 1"/><path d="M1.5 1.5L11.5 11.5M11.5 1.5L1.5 11.5" stroke="#8A8A8A"/></svg>
<div style="position:absolute;left:243px;top:138px;width:4px;height:329px;background:#ECE9D8"></div>
<div style="position:absolute;left:247px;top:138px;width:759px;height:329px;background:#fff;overflow:hidden"></div>
<div style="position:absolute;left:247px;top:138px;width:759px;height:28px;background:#C0C0C0"></div>
<div style="position:absolute;left:247px;top:166px;width:759px;height:1px;background:#000"></div>
<svg style="position:absolute;left:247px;top:138px;" width="759" height="28" viewBox="0 0 759 28" shape-rendering="crispEdges"><rect x="0" y="22" width="1" height="6" fill="#000"/><rect x="15" y="23" width="1" height="4" fill="#000"/><rect x="30" y="23" width="1" height="4" fill="#000"/><rect x="45" y="23" width="1" height="4" fill="#000"/><rect x="60" y="23" width="1" height="4" fill="#000"/><rect x="75" y="22" width="1" height="6" fill="#000"/><rect x="90" y="23" width="1" height="4" fill="#000"/><rect x="105" y="23" width="1" height="4" fill="#000"/><rect x="120" y="23" width="1" height="4" fill="#000"/><rect x="135" y="23" width="1" height="4" fill="#000"/><rect x="150" y="22" width="1" height="6" fill="#000"/><rect x="165" y="23" width="1" height="4" fill="#000"/><rect x="180" y="23" width="1" height="4" fill="#000"/><rect x="195" y="23" width="1" height="4" fill="#000"/><rect x="210" y="23" width="1" height="4" fill="#000"/><rect x="225" y="22" width="1" height="6" fill="#000"/><rect x="240" y="23" width="1" height="4" fill="#000"/><rect x="255" y="23" width="1" height="4" fill="#000"/><rect x="270" y="23" width="1" height="4" fill="#000"/><rect x="285" y="23" width="1" height="4" fill="#000"/><rect x="300" y="22" width="1" height="6" fill="#000"/><rect x="315" y="23" width="1" height="4" fill="#000"/><rect x="330" y="23" width="1" height="4" fill="#000"/><rect x="345" y="23" width="1" height="4" fill="#000"/><rect x="360" y="23" width="1" height="4" fill="#000"/><rect x="375" y="22" width="2" height="6" fill="#000"/><rect x="390" y="23" width="1" height="4" fill="#000"/><rect x="405" y="23" width="1" height="4" fill="#000"/><rect x="420" y="23" width="1" height="4" fill="#000"/><rect x="435" y="23" width="1" height="4" fill="#000"/><rect x="450" y="22" width="1" height="6" fill="#000"/><rect x="465" y="23" width="1" height="4" fill="#000"/><rect x="480" y="23" width="1" height="4" fill="#000"/><rect x="495" y="23" width="1" height="4" fill="#000"/><rect x="510" y="23" width="1" height="4" fill="#000"/><rect x="525" y="22" width="1" height="6" fill="#000"/><rect x="540" y="23" width="1" height="4" fill="#000"/><rect x="555" y="23" width="1" height="4" fill="#000"/><rect x="570" y="23" width="1" height="4" fill="#000"/><rect x="585" y="23" width="1" height="4" fill="#000"/><rect x="600" y="22" width="1" height="6" fill="#000"/><rect x="615" y="23" width="1" height="4" fill="#000"/><rect x="630" y="23" width="1" height="4" fill="#000"/><rect x="645" y="23" width="1" height="4" fill="#000"/><rect x="660" y="23" width="1" height="4" fill="#000"/><rect x="675" y="22" width="1" height="6" fill="#000"/><rect x="690" y="23" width="1" height="4" fill="#000"/><rect x="705" y="23" width="1" height="4" fill="#000"/><rect x="720" y="23" width="1" height="4" fill="#000"/><rect x="735" y="23" width="1" height="4" fill="#000"/><rect x="750" y="22" width="1" height="6" fill="#000"/></svg>
<div style="position:absolute;left:247px;top:138px;width:759px;height:28px;overflow:hidden">
<div style="position:absolute;left:37.2px;top:9px;width:80px;text-align:center;font-family:'Liberation Serif',serif;font-size:12px;line-height:14px;transform:scaleX(0.85)">64.514us</div>
<div style="position:absolute;left:112.2px;top:9px;width:80px;text-align:center;font-family:'Liberation Serif',serif;font-size:12px;line-height:14px;transform:scaleX(0.85)">82.634us</div>
<div style="position:absolute;left:187.2px;top:9px;width:80px;text-align:center;font-family:'Liberation Serif',serif;font-size:12px;line-height:14px;transform:scaleX(0.85)">100.753us</div>
<div style="position:absolute;left:262.2px;top:9px;width:80px;text-align:center;font-family:'Liberation Serif',serif;font-size:12px;line-height:14px;transform:scaleX(0.85)">118.872us</div>
<div style="position:absolute;left:337.2px;top:9px;width:80px;text-align:center;font-family:'Liberation Serif',serif;font-size:12px;line-height:14px;transform:scaleX(0.85)">136.991us</div>
<div style="position:absolute;left:412.2px;top:9px;width:80px;text-align:center;font-family:'Liberation Serif',serif;font-size:12px;line-height:14px;transform:scaleX(0.85)">155.11us</div>
<div style="position:absolute;left:487.2px;top:9px;width:80px;text-align:center;font-family:'Liberation Serif',serif;font-size:12px;line-height:14px;transform:scaleX(0.85)">173.229us</div>
<div style="position:absolute;left:562.2px;top:9px;width:80px;text-align:center;font-family:'Liberation Serif',serif;font-size:12px;line-height:14px;transform:scaleX(0.85)">191.348us</div>
<div style="position:absolute;left:637.2px;top:9px;width:80px;text-align:center;font-family:'Liberation Serif',serif;font-size:12px;line-height:14px;transform:scaleX(0.85)">209.467us</div>
<div style="position:absolute;left:712.2px;top:9px;width:80px;text-align:center;font-family:'Liberation Serif',serif;font-size:12px;line-height:14px;transform:scaleX(0.85)">227.586us</div>
</div>
<svg style="position:absolute;left:247px;top:138px;" width="12" height="22" viewBox="0 0 12 22" shape-rendering="crispEdges"><rect x="0" y="0" width="6" height="13" fill="#F00"/><rect x="6" y="1" width="1" height="12" fill="#000"/><rect x="0" y="9" width="10" height="12" fill="#0A80F0"/><rect x="10" y="9" width="1" height="12" fill="#000"/><rect x="0" y="21" width="10" height="1" fill="#000"/><circle cx="3" cy="14" r="1.5" stroke="#F08000" fill="none"/></svg>
<svg style="position:absolute;left:616px;top:138px;shape-rendering:auto" width="12" height="7" viewBox="0 0 12 7" shape-rendering="crispEdges"><path d="M0 0h12L6 7z" fill="#F00"/></svg>
<svg style="position:absolute;left:997px;top:138px;" width="9" height="12" viewBox="0 0 9 12" shape-rendering="crispEdges"><rect x="0" y="0" width="9" height="12" fill="#0A80F0"/><text x="2" y="10" font-size="10" fill="#F08000" font-family="Liberation Serif">D</text></svg>
<svg style="position:absolute;left:247px;top:138px" width="759" height="329" viewBox="0 0 759 329"><polygon points="6.1,31 97.4,31 99.4,63.5 97.4,96 6.1,96 4.1,63.5" fill="#C48ABF" stroke="#000" stroke-width="1" shape-rendering="crispEdges"/><polygon points="103.4,31 194.7,31 196.7,63.5 194.7,96 103.4,96 101.4,63.5" fill="#5AA6CB" stroke="#000" stroke-width="1" shape-rendering="crispEdges"/><polygon points="200.7,31 292.0,31 294.0,63.5 292.0,96 200.7,96 198.7,63.5" fill="#C48ABF" stroke="#000" stroke-width="1" shape-rendering="crispEdges"/><polygon points="298.0,31 389.3,31 391.3,63.5 389.3,96 298.0,96 296.0,63.5" fill="#5AA6CB" stroke="#000" stroke-width="1" shape-rendering="crispEdges"/><polygon points="395.3,31 486.6,31 488.6,63.5 486.6,96 395.3,96 393.3,63.5" fill="#C48ABF" stroke="#000" stroke-width="1" shape-rendering="crispEdges"/><polygon points="492.6,31 583.9,31 585.9,63.5 583.9,96 492.6,96 490.6,63.5" fill="#5AA6CB" stroke="#000" stroke-width="1" shape-rendering="crispEdges"/><polygon points="589.9,31 681.2,31 683.2,63.5 681.2,96 589.9,96 587.9,63.5" fill="#C48ABF" stroke="#000" stroke-width="1" shape-rendering="crispEdges"/><polygon points="687.2,31 778.5,31 780.5,63.5 778.5,96 687.2,96 685.2,63.5" fill="#5AA6CB" stroke="#000" stroke-width="1" shape-rendering="crispEdges"/><rect x="0" y="165" width="4" height="1" fill="#800000"/><rect x="3" y="103" width="1" height="63" fill="#800000"/><rect x="3" y="100" width="98" height="2" fill="#800000"/><rect x="100" y="100" width="1" height="66" fill="#800000"/><rect x="100" y="165" width="99" height="1" fill="#800000"/><rect x="198" y="103" width="1" height="63" fill="#800000"/><rect x="198" y="100" width="98" height="2" fill="#800000"/><rect x="295" y="100" width="1" height="66" fill="#800000"/><rect x="295" y="165" width="98" height="1" fill="#800000"/><rect x="392" y="103" width="1" height="63" fill="#800000"/><rect x="392" y="100" width="99" height="2" fill="#800000"/><rect x="490" y="100" width="1" height="66" fill="#800000"/><rect x="490" y="165" width="98" height="1" fill="#800000"/><rect x="587" y="103" width="1" height="63" fill="#800000"/><rect x="587" y="100" width="98" height="2" fill="#800000"/><rect x="684" y="100" width="1" height="66" fill="#800000"/><rect x="684" y="165" width="75" height="1" fill="#800000"/><rect x="0" y="235" width="6" height="1" fill="#FF0000"/><rect x="5" y="173" width="1" height="63" fill="#FF0000"/><rect x="5" y="170" width="3" height="2" fill="#FF0000"/><rect x="7" y="170" width="1" height="66" fill="#FF0000"/><rect x="7" y="235" width="5" height="1" fill="#FF0000"/><rect x="11" y="173" width="1" height="63" fill="#FF0000"/><rect x="11" y="170" width="3" height="2" fill="#FF0000"/><rect x="13" y="170" width="1" height="66" fill="#FF0000"/><rect x="13" y="235" width="5" height="1" fill="#FF0000"/><rect x="17" y="173" width="1" height="63" fill="#FF0000"/><rect x="17" y="170" width="3" height="2" fill="#FF0000"/><rect x="19" y="170" width="1" height="66" fill="#FF0000"/><rect x="19" y="235" width="5" height="1" fill="#FF0000"/><rect x="23" y="173" width="1" height="63" fill="#FF0000"/><rect x="23" y="170" width="3" height="2" fill="#FF0000"/><rect x="25" y="170" width="1" height="66" fill="#FF0000"/><rect x="25" y="235" width="5" height="1" fill="#FF0000"/><rect x="29" y="173" width="1" height="63" fill="#FF0000"/><rect x="29" y="170" width="3" height="2" fill="#FF0000"/><rect x="31" y="170" width="1" height="66" fill="#FF0000"/><rect x="31" y="235" width="5" height="1" fill="#FF0000"/><rect x="35" y="173" width="1" height="63" fill="#FF0000"/><rect x="35" y="170" width="3" height="2" fill="#FF0000"/><rect x="37" y="170" width="1" height="66" fill="#FF0000"/><rect x="37" y="235" width="5" height="1" fill="#FF0000"/><rect x="41" y="173" width="1" height="63" fill="#FF0000"/><rect x="41" y="170" width="3" height="2" fill="#FF0000"/><rect x="43" y="170" width="1" height="66" fill="#FF0000"/><rect x="43" y="235" width="6" height="1" fill="#FF0000"/><rect x="48" y="173" width="1" height="63" fill="#FF0000"/><rect x="48" y="170" width="3" height="2" fill="#FF0000"/><rect x="50" y="170" width="1" height="66" fill="#FF0000"/><rect x="50" y="235" width="5" height="1" fill="#FF0000"/><rect x="54" y="173" width="1" height="63" fill="#FF0000"/><rect x="54" y="170" width="3" height="2" fill="#FF0000"/><rect x="56" y="170" width="1" height="66" fill="#FF0000"/><rect x="56" y="235" width="5" height="1" fill="#FF0000"/><rect x="60" y="173" width="1" height="63" fill="#FF0000"/><rect x="60" y="170" width="3" height="2" fill="#FF0000"/><rect x="62" y="170" width="1" height="66" fill="#FF0000"/><rect x="62" y="235" width="5" height="1" fill="#FF0000"/><rect x="66" y="173" width="1" height="63" fill="#FF0000"/><rect x="66" y="170" width="3" height="2" fill="#FF0000"/><rect x="68" y="170" width="1" height="66" fill="#FF0000"/><rect x="68" y="235" width="5" height="1" fill="#FF0000"/><rect x="72" y="173" width="1" height="63" fill="#FF0000"/><rect x="72" y="170" width="3" height="2" fill="#FF0000"/><rect x="74" y="170" width="1" height="66" fill="#FF0000"/><rect x="74" y="235" width="5" height="1" fill="#FF0000"/><rect x="78" y="173" width="1" height="63" fill="#FF0000"/><rect x="78" y="170" width="3" height="2" fill="#FF0000"/><rect x="80" y="170" width="1" height="66" fill="#FF0000"/><rect x="80" y="235" width="5" height="1" fill="#FF0000"/><rect x="84" y="173" width="1" height="63" fill="#FF0000"/><rect x="84" y="170" width="3" height="2" fill="#FF0000"/><rect x="86" y="170" width="1" height="66" fill="#FF0000"/><rect x="86" y="235" width="5" height="1" fill="#FF0000"/><rect x="90" y="173" width="1" height="63" fill="#FF0000"/><rect x="90" y="170" width="3" height="2" fill="#FF0000"/><rect x="92" y="170" width="1" height="66" fill="#FF0000"/><rect x="92" y="235" width="5" height="1" fill="#FF0000"/><rect x="96" y="173" width="1" height="63" fill="#FF0000"/><rect x="96" y="170" width="3" height="2" fill="#FF0000"/><rect x="98" y="170" width="1" height="66" fill="#FF0000"/><rect x="98" y="235" width="5" height="1" fill="#FF0000"/><rect x="102" y="173" width="1" height="63" fill="#FF0000"/><rect x="102" y="170" width="3" height="2" fill="#FF0000"/><rect x="104" y="170" width="1" height="66" fill="#FF0000"/><rect x="104" y="235" width="5" height="1" fill="#FF0000"/><rect x="108" y="173" width="1" height="63" fill="#FF0000"/><rect x="108" y="170" width="3" height="2" fill="#FF0000"/><rect x="110" y="170" width="1" height="66" fill="#FF0000"/><rect x="110" y="235" width="5" height="1" fill="#FF0000"/><rect x="114" y="173" width="1" height="63" fill="#FF0000"/><rect x="114" y="170" width="3" height="2" fill="#FF0000"/><rect x="116" y="170" width="1" height="66" fill="#FF0000"/><rect x="116" y="235" width="6" height="1" fill="#FF0000"/><rect x="121" y="173" width="1" height="63" fill="#FF0000"/><rect x="121" y="170" width="3" height="2" fill="#FF0000"/><rect x="123" y="170" width="1" height="66" fill="#FF0000"/><rect x="123" y="235" width="5" height="1" fill="#FF0000"/><rect x="127" y="173" width="1" height="63" fill="#FF0000"/><rect x="127" y="170" width="3" height="2" fill="#FF0000"/><rect x="129" y="170" width="1" height="66" fill="#FF0000"/><rect x="129" y="235" width="5" height="1" fill="#FF0000"/><rect x="133" y="173" width="1" height="63" fill="#FF0000"/><rect x="133" y="170" width="3" height="2" fill="#FF0000"/><rect x="135" y="170" width="1" height="66" fill="#FF0000"/><rect x="135" y="235" width="5" height="1" fill="#FF0000"/><rect x="139" y="173" width="1" height="63" fill="#FF0000"/><rect x="139" y="170" width="3" height="2" fill="#FF0000"/><rect x="141" y="170" width="1" height="66" fill="#FF0000"/><rect x="141" y="235" width="5" height="1" fill="#FF0000"/><rect x="145" y="173" width="1" height="63" fill="#FF0000"/><rect x="145" y="170" width="3" height="2" fill="#FF0000"/><rect x="147" y="170" width="1" height="66" fill="#FF0000"/><rect x="147" y="235" width="5" height="1" fill="#FF0000"/><rect x="151" y="173" width="1" height="63" fill="#FF0000"/><rect x="151" y="170" width="3" height="2" fill="#FF0000"/><rect x="153" y="170" width="1" height="66" fill="#FF0000"/><rect x="153" y="235" width="5" height="1" fill="#FF0000"/><rect x="157" y="173" width="1" height="63" fill="#FF0000"/><rect x="157" y="170" width="3" height="2" fill="#FF0000"/><rect x="159" y="170" width="1" height="66" fill="#FF0000"/><rect x="159" y="235" width="5" height="1" fill="#FF0000"/><rect x="163" y="173" width="1" height="63" fill="#FF0000"/><rect x="163" y="170" width="3" height="2" fill="#FF0000"/><rect x="165" y="170" width="1" height="66" fill="#FF0000"/><rect x="165" y="235" width="5" height="1" fill="#FF0000"/><rect x="169" y="173" width="1" height="63" fill="#FF0000"/><rect x="169" y="170" width="3" height="2" fill="#FF0000"/><rect x="171" y="170" width="1" height="66" fill="#FF0000"/><rect x="171" y="235" width="5" height="1" fill="#FF0000"/><rect x="175" y="173" width="1" height="63" fill="#FF0000"/><rect x="175" y="170" width="3" height="2" fill="#FF0000"/><rect x="177" y="170" width="1" height="66" fill="#FF0000"/><rect x="177" y="235" width="5" height="1" fill="#FF0000"/><rect x="181" y="173" width="1" height="63" fill="#FF0000"/><rect x="181" y="170" width="3" height="2" fill="#FF0000"/><rect x="183" y="170" width="1" height="66" fill="#FF0000"/><rect x="183" y="235" width="5" height="1" fill="#FF0000"/><rect x="187" y="173" width="1" height="63" fill="#FF0000"/><rect x="187" y="170" width="3" height="2" fill="#FF0000"/><rect x="189" y="170" width="1" height="66" fill="#FF0000"/><rect x="189" y="235" width="5" height="1" fill="#FF0000"/><rect x="193" y="173" width="1" height="63" fill="#FF0000"/><rect x="193" y="170" width="3" height="2" fill="#FF0000"/><rect x="195" y="170" width="1" height="66" fill="#FF0000"/><rect x="195" y="235" width="6" height="1" fill="#FF0000"/><rect x="200" y="173" width="1" height="63" fill="#FF0000"/><rect x="200" y="170" width="3" height="2" fill="#FF0000"/><rect x="202" y="170" width="1" height="66" fill="#FF0000"/><rect x="202" y="235" width="5" height="1" fill="#FF0000"/><rect x="206" y="173" width="1" height="63" fill="#FF0000"/><rect x="206" y="170" width="3" height="2" fill="#FF0000"/><rect x="208" y="170" width="1" height="66" fill="#FF0000"/><rect x="208" y="235" width="5" height="1" fill="#FF0000"/><rect x="212" y="173" width="1" height="63" fill="#FF0000"/><rect x="212" y="170" width="3" height="2" fill="#FF0000"/><rect x="214" y="170" width="1" height="66" fill="#FF0000"/><rect x="214" y="235" width="5" height="1" fill="#FF0000"/><rect x="218" y="173" width="1" height="63" fill="#FF0000"/><rect x="218" y="170" width="3" height="2" fill="#FF0000"/><rect x="220" y="170" width="1" height="66" fill="#FF0000"/><rect x="220" y="235" width="5" height="1" fill="#FF0000"/><rect x="224" y="173" width="1" height="63" fill="#FF0000"/><rect x="224" y="170" width="3" height="2" fill="#FF0000"/><rect x="226" y="170" width="1" height="66" fill="#FF0000"/><rect x="226" y="235" width="5" height="1" fill="#FF0000"/><rect x="230" y="173" width="1" height="63" fill="#FF0000"/><rect x="230" y="170" width="3" height="2" fill="#FF0000"/><rect x="232" y="170" width="1" height="66" fill="#FF0000"/><rect x="232" y="235" width="5" height="1" fill="#FF0000"/><rect x="236" y="173" width="1" height="63" fill="#FF0000"/><rect x="236" y="170" width="3" height="2" fill="#FF0000"/><rect x="238" y="170" width="1" height="66" fill="#FF0000"/><rect x="238" y="235" width="5" height="1" fill="#FF0000"/><rect x="242" y="173" width="1" height="63" fill="#FF0000"/><rect x="242" y="170" width="3" height="2" fill="#FF0000"/><rect x="244" y="170" width="1" height="66" fill="#FF0000"/><rect x="244" y="235" width="5" height="1" fill="#FF0000"/><rect x="248" y="173" width="1" height="63" fill="#FF0000"/><rect x="248" y="170" width="3" height="2" fill="#FF0000"/><rect x="250" y="170" width="1" height="66" fill="#FF0000"/><rect x="250" y="235" width="5" height="1" fill="#FF0000"/><rect x="254" y="173" width="1" height="63" fill="#FF0000"/><rect x="254" y="170" width="3" height="2" fill="#FF0000"/><rect x="256" y="170" width="1" height="66" fill="#FF0000"/><rect x="256" y="235" width="5" height="1" fill="#FF0000"/><rect x="260" y="173" width="1" height="63" fill="#FF0000"/><rect x="260" y="170" width="3" height="2" fill="#FF0000"/><rect x="262" y="170" width="1" height="66" fill="#FF0000"/><rect x="262" y="235" width="5" height="1" fill="#FF0000"/><rect x="266" y="173" width="1" height="63" fill="#FF0000"/><rect x="266" y="170" width="3" height="2" fill="#FF0000"/><rect x="268" y="170" width="1" height="66" fill="#FF0000"/><rect x="268" y="235" width="6" height="1" fill="#FF0000"/><rect x="273" y="173" width="1" height="63" fill="#FF0000"/><rect x="273" y="170" width="3" height="2" fill="#FF0000"/><rect x="275" y="170" width="1" height="66" fill="#FF0000"/><rect x="275" y="235" width="5" height="1" fill="#FF0000"/><rect x="279" y="173" width="1" height="63" fill="#FF0000"/><rect x="279" y="170" width="3" height="2" fill="#FF0000"/><rect x="281" y="170" width="1" height="66" fill="#FF0000"/><rect x="281" y="235" width="5" height="1" fill="#FF0000"/><rect x="285" y="173" width="1" height="63" fill="#FF0000"/><rect x="285" y="170" width="3" height="2" fill="#FF0000"/><rect x="287" y="170" width="1" height="66" fill="#FF0000"/><rect x="287" y="235" width="5" height="1" fill="#FF0000"/><rect x="291" y="173" width="1" height="63" fill="#FF0000"/><rect x="291" y="170" width="3" height="2" fill="#FF0000"/><rect x="293" y="170" width="1" height="66" fill="#FF0000"/><rect x="293" y="235" width="5" height="1" fill="#FF0000"/><rect x="297" y="173" width="1" height="63" fill="#FF0000"/><rect x="297" y="170" width="3" height="2" fill="#FF0000"/><rect x="299" y="170" width="1" height="66" fill="#FF0000"/><rect x="299" y="235" width="5" height="1" fill="#FF0000"/><rect x="303" y="173" width="1" height="63" fill="#FF0000"/><rect x="303" y="170" width="3" height="2" fill="#FF0000"/><rect x="305" y="170" width="1" height="66" fill="#FF0000"/><rect x="305" y="235" width="5" height="1" fill="#FF0000"/><rect x="309" y="173" width="1" height="63" fill="#FF0000"/><rect x="309" y="170" width="3" height="2" fill="#FF0000"/><rect x="311" y="170" width="1" height="66" fill="#FF0000"/><rect x="311" y="235" width="5" height="1" fill="#FF0000"/><rect x="315" y="173" width="1" height="63" fill="#FF0000"/><rect x="315" y="170" width="3" height="2" fill="#FF0000"/><rect x="317" y="170" width="1" height="66" fill="#FF0000"/><rect x="317" y="235" width="5" height="1" fill="#FF0000"/><rect x="321" y="173" width="1" height="63" fill="#FF0000"/><rect x="321" y="170" width="3" height="2" fill="#FF0000"/><rect x="323" y="170" width="1" height="66" fill="#FF0000"/><rect x="323" y="235" width="5" height="1" fill="#FF0000"/><rect x="327" y="173" width="1" height="63" fill="#FF0000"/><rect x="327" y="170" width="3" height="2" fill="#FF0000"/><rect x="329" y="170" width="1" height="66" fill="#FF0000"/><rect x="329" y="235" width="5" height="1" fill="#FF0000"/><rect x="333" y="173" width="1" height="63" fill="#FF0000"/><rect x="333" y="170" width="3" height="2" fill="#FF0000"/><rect x="335" y="170" width="1" height="66" fill="#FF0000"/><rect x="335" y="235" width="5" height="1" fill="#FF0000"/><rect x="339" y="173" width="1" height="63" fill="#FF0000"/><rect x="339" y="170" width="3" height="2" fill="#FF0000"/><rect x="341" y="170" width="1" height="66" fill="#FF0000"/><rect x="341" y="235" width="5" height="1" fill="#FF0000"/><rect x="345" y="173" width="1" height="63" fill="#FF0000"/><rect x="345" y="170" width="3" height="2" fill="#FF0000"/><rect x="347" y="170" width="1" height="66" fill="#FF0000"/><rect x="347" y="235" width="6" height="1" fill="#FF0000"/><rect x="352" y="173" width="1" height="63" fill="#FF0000"/><rect x="352" y="170" width="3" height="2" fill="#FF0000"/><rect x="354" y="170" width="1" height="66" fill="#FF0000"/><rect x="354" y="235" width="5" height="1" fill="#FF0000"/><rect x="358" y="173" width="1" height="63" fill="#FF0000"/><rect x="358" y="170" width="3" height="2" fill="#FF0000"/><rect x="360" y="170" width="1" height="66" fill="#FF0000"/><rect x="360" y="235" width="5" height="1" fill="#FF0000"/><rect x="364" y="173" width="1" height="63" fill="#FF0000"/><rect x="364" y="170" width="3" height="2" fill="#FF0000"/><rect x="366" y="170" width="1" height="66" fill="#FF0000"/><rect x="366" y="235" width="5" height="1" fill="#FF0000"/><rect x="370" y="173" width="1" height="63" fill="#FF0000"/><rect x="370" y="170" width="3" height="2" fill="#FF0000"/><rect x="372" y="170" width="1" height="66" fill="#FF0000"/><rect x="372" y="235" width="5" height="1" fill="#FF0000"/><rect x="376" y="173" width="1" height="63" fill="#FF0000"/><rect x="376" y="170" width="3" height="2" fill="#FF0000"/><rect x="378" y="170" width="1" height="66" fill="#FF0000"/><rect x="378" y="235" width="5" height="1" fill="#FF0000"/><rect x="382" y="173" width="1" height="63" fill="#FF0000"/><rect x="382" y="170" width="3" height="2" fill="#FF0000"/><rect x="384" y="170" width="1" height="66" fill="#FF0000"/><rect x="384" y="235" width="5" height="1" fill="#FF0000"/><rect x="388" y="173" width="1" height="63" fill="#FF0000"/><rect x="388" y="170" width="3" height="2" fill="#FF0000"/><rect x="390" y="170" width="1" height="66" fill="#FF0000"/><rect x="390" y="235" width="5" height="1" fill="#FF0000"/><rect x="394" y="173" width="1" height="63" fill="#FF0000"/><rect x="394" y="170" width="3" height="2" fill="#FF0000"/><rect x="396" y="170" width="1" height="66" fill="#FF0000"/><rect x="396" y="235" width="5" height="1" fill="#FF0000"/><rect x="400" y="173" width="1" height="63" fill="#FF0000"/><rect x="400" y="170" width="3" height="2" fill="#FF0000"/><rect x="402" y="170" width="1" height="66" fill="#FF0000"/><rect x="402" y="235" width="5" height="1" fill="#FF0000"/><rect x="406" y="173" width="1" height="63" fill="#FF0000"/><rect x="406" y="170" width="3" height="2" fill="#FF0000"/><rect x="408" y="170" width="1" height="66" fill="#FF0000"/><rect x="408" y="235" width="5" height="1" fill="#FF0000"/><rect x="412" y="173" width="1" height="63" fill="#FF0000"/><rect x="412" y="170" width="3" height="2" fill="#FF0000"/><rect x="414" y="170" width="1" height="66" fill="#FF0000"/><rect x="414" y="235" width="5" height="1" fill="#FF0000"/><rect x="418" y="173" width="1" height="63" fill="#FF0000"/><rect x="418" y="170" width="3" height="2" fill="#FF0000"/><rect x="420" y="170" width="1" height="66" fill="#FF0000"/><rect x="420" y="235" width="6" height="1" fill="#FF0000"/><rect x="425" y="173" width="1" height="63" fill="#FF0000"/><rect x="425" y="170" width="3" height="2" fill="#FF0000"/><rect x="427" y="170" width="1" height="66" fill="#FF0000"/><rect x="427" y="235" width="5" height="1" fill="#FF0000"/><rect x="431" y="173" width="1" height="63" fill="#FF0000"/><rect x="431" y="170" width="3" height="2" fill="#FF0000"/><rect x="433" y="170" width="1" height="66" fill="#FF0000"/><rect x="433" y="235" width="5" height="1" fill="#FF0000"/><rect x="437" y="173" width="1" height="63" fill="#FF0000"/><rect x="437" y="170" width="3" height="2" fill="#FF0000"/><rect x="439" y="170" width="1" height="66" fill="#FF0000"/><rect x="439" y="235" width="5" height="1" fill="#FF0000"/><rect x="443" y="173" width="1" height="63" fill="#FF0000"/><rect x="443" y="170" width="3" height="2" fill="#FF0000"/><rect x="445" y="170" width="1" height="66" fill="#FF0000"/><rect x="445" y="235" width="5" height="1" fill="#FF0000"/><rect x="449" y="173" width="1" height="63" fill="#FF0000"/><rect x="449" y="170" width="3" height="2" fill="#FF0000"/><rect x="451" y="170" width="1" height="66" fill="#FF0000"/><rect x="451" y="235" width="5" height="1" fill="#FF0000"/><rect x="455" y="173" width="1" height="63" fill="#FF0000"/><rect x="455" y="170" width="3" height="2" fill="#FF0000"/><rect x="457" y="170" width="1" height="66" fill="#FF0000"/><rect x="457" y="235" width="5" height="1" fill="#FF0000"/><rect x="461" y="173" width="1" height="63" fill="#FF0000"/><rect x="461" y="170" width="3" height="2" fill="#FF0000"/><rect x="463" y="170" width="1" height="66" fill="#FF0000"/><rect x="463" y="235" width="5" height="1" fill="#FF0000"/><rect x="467" y="173" width="1" height="63" fill="#FF0000"/><rect x="467" y="170" width="3" height="2" fill="#FF0000"/><rect x="469" y="170" width="1" height="66" fill="#FF0000"/><rect x="469" y="235" width="5" height="1" fill="#FF0000"/><rect x="473" y="173" width="1" height="63" fill="#FF0000"/><rect x="473" y="170" width="3" height="2" fill="#FF0000"/><rect x="475" y="170" width="1" height="66" fill="#FF0000"/><rect x="475" y="235" width="5" height="1" fill="#FF0000"/><rect x="479" y="173" width="1" height="63" fill="#FF0000"/><rect x="479" y="170" width="3" height="2" fill="#FF0000"/><rect x="481" y="170" width="1" height="66" fill="#FF0000"/><rect x="481" y="235" width="5" height="1" fill="#FF0000"/><rect x="485" y="173" width="1" height="63" fill="#FF0000"/><rect x="485" y="170" width="3" height="2" fill="#FF0000"/><rect x="487" y="170" width="1" height="66" fill="#FF0000"/><rect x="487" y="235" width="5" height="1" fill="#FF0000"/><rect x="491" y="173" width="1" height="63" fill="#FF0000"/><rect x="491" y="170" width="3" height="2" fill="#FF0000"/><rect x="493" y="170" width="1" height="66" fill="#FF0000"/><rect x="493" y="235" width="5" height="1" fill="#FF0000"/><rect x="497" y="173" width="1" height="63" fill="#FF0000"/><rect x="497" y="170" width="3" height="2" fill="#FF0000"/><rect x="499" y="170" width="1" height="66" fill="#FF0000"/><rect x="499" y="235" width="6" height="1" fill="#FF0000"/><rect x="504" y="173" width="1" height="63" fill="#FF0000"/><rect x="504" y="170" width="3" height="2" fill="#FF0000"/><rect x="506" y="170" width="1" height="66" fill="#FF0000"/><rect x="506" y="235" width="5" height="1" fill="#FF0000"/><rect x="510" y="173" width="1" height="63" fill="#FF0000"/><rect x="510" y="170" width="3" height="2" fill="#FF0000"/><rect x="512" y="170" width="1" height="66" fill="#FF0000"/><rect x="512" y="235" width="5" height="1" fill="#FF0000"/><rect x="516" y="173" width="1" height="63" fill="#FF0000"/><rect x="516" y="170" width="3" height="2" fill="#FF0000"/><rect x="518" y="170" width="1" height="66" fill="#FF0000"/><rect x="518" y="235" width="5" height="1" fill="#FF0000"/><rect x="522" y="173" width="1" height="63" fill="#FF0000"/><rect x="522" y="170" width="3" height="2" fill="#FF0000"/><rect x="524" y="170" width="1" height="66" fill="#FF0000"/><rect x="524" y="235" width="5" height="1" fill="#FF0000"/><rect x="528" y="173" width="1" height="63" fill="#FF0000"/><rect x="528" y="170" width="3" height="2" fill="#FF0000"/><rect x="530" y="170" width="1" height="66" fill="#FF0000"/><rect x="530" y="235" width="5" height="1" fill="#FF0000"/><rect x="534" y="173" width="1" height="63" fill="#FF0000"/><rect x="534" y="170" width="3" height="2" fill="#FF0000"/><rect x="536" y="170" width="1" height="66" fill="#FF0000"/><rect x="536" y="235" width="5" height="1" fill="#FF0000"/><rect x="540" y="173" width="1" height="63" fill="#FF0000"/><rect x="540" y="170" width="3" height="2" fill="#FF0000"/><rect x="542" y="170" width="1" height="66" fill="#FF0000"/><rect x="542" y="235" width="5" height="1" fill="#FF0000"/><rect x="546" y="173" width="1" height="63" fill="#FF0000"/><rect x="546" y="170" width="3" height="2" fill="#FF0000"/><rect x="548" y="170" width="1" height="66" fill="#FF0000"/><rect x="548" y="235" width="5" height="1" fill="#FF0000"/><rect x="552" y="173" width="1" height="63" fill="#FF0000"/><rect x="552" y="170" width="3" height="2" fill="#FF0000"/><rect x="554" y="170" width="1" height="66" fill="#FF0000"/><rect x="554" y="235" width="5" height="1" fill="#FF0000"/><rect x="558" y="173" width="1" height="63" fill="#FF0000"/><rect x="558" y="170" width="3" height="2" fill="#FF0000"/><rect x="560" y="170" width="1" height="66" fill="#FF0000"/><rect x="560" y="235" width="5" height="1" fill="#FF0000"/><rect x="564" y="173" width="1" height="63" fill="#FF0000"/><rect x="564" y="170" width="3" height="2" fill="#FF0000"/><rect x="566" y="170" width="1" height="66" fill="#FF0000"/><rect x="566" y="235" width="5" height="1" fill="#FF0000"/><rect x="570" y="173" width="1" height="63" fill="#FF0000"/><rect x="570" y="170" width="3" height="2" fill="#FF0000"/><rect x="572" y="170" width="1" height="66" fill="#FF0000"/><rect x="572" y="235" width="6" height="1" fill="#FF0000"/><rect x="577" y="173" width="1" height="63" fill="#FF0000"/><rect x="577" y="170" width="3" height="2" fill="#FF0000"/><rect x="579" y="170" width="1" height="66" fill="#FF0000"/><rect x="579" y="235" width="5" height="1" fill="#FF0000"/><rect x="583" y="173" width="1" height="63" fill="#FF0000"/><rect x="583" y="170" width="3" height="2" fill="#FF0000"/><rect x="585" y="170" width="1" height="66" fill="#FF0000"/><rect x="585" y="235" width="5" height="1" fill="#FF0000"/><rect x="589" y="173" width="1" height="63" fill="#FF0000"/><rect x="589" y="170" width="3" height="2" fill="#FF0000"/><rect x="591" y="170" width="1" height="66" fill="#FF0000"/><rect x="591" y="235" width="5" height="1" fill="#FF0000"/><rect x="595" y="173" width="1" height="63" fill="#FF0000"/><rect x="595" y="170" width="3" height="2" fill="#FF0000"/><rect x="597" y="170" width="1" height="66" fill="#FF0000"/><rect x="597" y="235" width="5" height="1" fill="#FF0000"/><rect x="601" y="173" width="1" height="63" fill="#FF0000"/><rect x="601" y="170" width="3" height="2" fill="#FF0000"/><rect x="603" y="170" width="1" height="66" fill="#FF0000"/><rect x="603" y="235" width="5" height="1" fill="#FF0000"/><rect x="607" y="173" width="1" height="63" fill="#FF0000"/><rect x="607" y="170" width="3" height="2" fill="#FF0000"/><rect x="609" y="170" width="1" height="66" fill="#FF0000"/><rect x="609" y="235" width="5" height="1" fill="#FF0000"/><rect x="613" y="173" width="1" height="63" fill="#FF0000"/><rect x="613" y="170" width="3" height="2" fill="#FF0000"/><rect x="615" y="170" width="1" height="66" fill="#FF0000"/><rect x="615" y="235" width="5" height="1" fill="#FF0000"/><rect x="619" y="173" width="1" height="63" fill="#FF0000"/><rect x="619" y="170" width="3" height="2" fill="#FF0000"/><rect x="621" y="170" width="1" height="66" fill="#FF0000"/><rect x="621" y="235" width="5" height="1" fill="#FF0000"/><rect x="625" y="173" width="1" height="63" fill="#FF0000"/><rect x="625" y="170" width="3" height="2" fill="#FF0000"/><rect x="627" y="170" width="1" height="66" fill="#FF0000"/><rect x="627" y="235" width="5" height="1" fill="#FF0000"/><rect x="631" y="173" width="1" height="63" fill="#FF0000"/><rect x="631" y="170" width="3" height="2" fill="#FF0000"/><rect x="633" y="170" width="1" height="66" fill="#FF0000"/><rect x="633" y="235" width="5" height="1" fill="#FF0000"/><rect x="637" y="173" width="1" height="63" fill="#FF0000"/><rect x="637" y="170" width="3" height="2" fill="#FF0000"/><rect x="639" y="170" width="1" height="66" fill="#FF0000"/><rect x="639" y="235" width="5" height="1" fill="#FF0000"/><rect x="643" y="173" width="1" height="63" fill="#FF0000"/><rect x="643" y="170" width="3" height="2" fill="#FF0000"/><rect x="645" y="170" width="1" height="66" fill="#FF0000"/><rect x="645" y="235" width="5" height="1" fill="#FF0000"/><rect x="649" y="173" width="1" height="63" fill="#FF0000"/><rect x="649" y="170" width="3" height="2" fill="#FF0000"/><rect x="651" y="170" width="1" height="66" fill="#FF0000"/><rect x="651" y="235" width="6" height="1" fill="#FF0000"/><rect x="656" y="173" width="1" height="63" fill="#FF0000"/><rect x="656" y="170" width="3" height="2" fill="#FF0000"/><rect x="658" y="170" width="1" height="66" fill="#FF0000"/><rect x="658" y="235" width="5" height="1" fill="#FF0000"/><rect x="662" y="173" width="1" height="63" fill="#FF0000"/><rect x="662" y="170" width="3" height="2" fill="#FF0000"/><rect x="664" y="170" width="1" height="66" fill="#FF0000"/><rect x="664" y="235" width="5" height="1" fill="#FF0000"/><rect x="668" y="173" width="1" height="63" fill="#FF0000"/><rect x="668" y="170" width="3" height="2" fill="#FF0000"/><rect x="670" y="170" width="1" height="66" fill="#FF0000"/><rect x="670" y="235" width="5" height="1" fill="#FF0000"/><rect x="674" y="173" width="1" height="63" fill="#FF0000"/><rect x="674" y="170" width="3" height="2" fill="#FF0000"/><rect x="676" y="170" width="1" height="66" fill="#FF0000"/><rect x="676" y="235" width="5" height="1" fill="#FF0000"/><rect x="680" y="173" width="1" height="63" fill="#FF0000"/><rect x="680" y="170" width="3" height="2" fill="#FF0000"/><rect x="682" y="170" width="1" height="66" fill="#FF0000"/><rect x="682" y="235" width="5" height="1" fill="#FF0000"/><rect x="686" y="173" width="1" height="63" fill="#FF0000"/><rect x="686" y="170" width="3" height="2" fill="#FF0000"/><rect x="688" y="170" width="1" height="66" fill="#FF0000"/><rect x="688" y="235" width="5" height="1" fill="#FF0000"/><rect x="692" y="173" width="1" height="63" fill="#FF0000"/><rect x="692" y="170" width="3" height="2" fill="#FF0000"/><rect x="694" y="170" width="1" height="66" fill="#FF0000"/><rect x="694" y="235" width="5" height="1" fill="#FF0000"/><rect x="698" y="173" width="1" height="63" fill="#FF0000"/><rect x="698" y="170" width="3" height="2" fill="#FF0000"/><rect x="700" y="170" width="1" height="66" fill="#FF0000"/><rect x="700" y="235" width="5" height="1" fill="#FF0000"/><rect x="704" y="173" width="1" height="63" fill="#FF0000"/><rect x="704" y="170" width="3" height="2" fill="#FF0000"/><rect x="706" y="170" width="1" height="66" fill="#FF0000"/><rect x="706" y="235" width="5" height="1" fill="#FF0000"/><rect x="710" y="173" width="1" height="63" fill="#FF0000"/><rect x="710" y="170" width="3" height="2" fill="#FF0000"/><rect x="712" y="170" width="1" height="66" fill="#FF0000"/><rect x="712" y="235" width="5" height="1" fill="#FF0000"/><rect x="716" y="173" width="1" height="63" fill="#FF0000"/><rect x="716" y="170" width="3" height="2" fill="#FF0000"/><rect x="718" y="170" width="1" height="66" fill="#FF0000"/><rect x="718" y="235" width="5" height="1" fill="#FF0000"/><rect x="722" y="173" width="1" height="63" fill="#FF0000"/><rect x="722" y="170" width="3" height="2" fill="#FF0000"/><rect x="724" y="170" width="1" height="66" fill="#FF0000"/><rect x="724" y="235" width="6" height="1" fill="#FF0000"/><rect x="729" y="173" width="1" height="63" fill="#FF0000"/><rect x="729" y="170" width="3" height="2" fill="#FF0000"/><rect x="731" y="170" width="1" height="66" fill="#FF0000"/><rect x="731" y="235" width="5" height="1" fill="#FF0000"/><rect x="735" y="173" width="1" height="63" fill="#FF0000"/><rect x="735" y="170" width="3" height="2" fill="#FF0000"/><rect x="737" y="170" width="1" height="66" fill="#FF0000"/><rect x="737" y="235" width="5" height="1" fill="#FF0000"/><rect x="741" y="173" width="1" height="63" fill="#FF0000"/><rect x="741" y="170" width="3" height="2" fill="#FF0000"/><rect x="743" y="170" width="1" height="66" fill="#FF0000"/><rect x="743" y="235" width="5" height="1" fill="#FF0000"/><rect x="747" y="173" width="1" height="63" fill="#FF0000"/><rect x="747" y="170" width="3" height="2" fill="#FF0000"/><rect x="749" y="170" width="1" height="66" fill="#FF0000"/><rect x="749" y="235" width="5" height="1" fill="#FF0000"/><rect x="753" y="173" width="1" height="63" fill="#FF0000"/><rect x="753" y="170" width="3" height="2" fill="#FF0000"/><rect x="755" y="170" width="1" height="66" fill="#FF0000"/><rect x="755" y="235" width="4" height="1" fill="#FF0000"/><rect x="0" y="305" width="3" height="1" fill="#FF8040"/><rect x="2" y="243" width="1" height="63" fill="#FF8040"/><rect x="2" y="240" width="2" height="2" fill="#FF8040"/><rect x="3" y="240" width="1" height="66" fill="#FF8040"/><rect x="3" y="305" width="33" height="1" fill="#FF8040"/><rect x="35" y="243" width="1" height="63" fill="#FF8040"/><rect x="35" y="240" width="11" height="2" fill="#FF8040"/><rect x="45" y="240" width="1" height="66" fill="#FF8040"/><rect x="45" y="305" width="39" height="1" fill="#FF8040"/><rect x="83" y="243" width="1" height="63" fill="#FF8040"/><rect x="83" y="240" width="19" height="2" fill="#FF8040"/><rect x="101" y="240" width="1" height="66" fill="#FF8040"/><rect x="101" y="305" width="25" height="1" fill="#FF8040"/><rect x="125" y="243" width="1" height="63" fill="#FF8040"/><rect x="125" y="240" width="7" height="2" fill="#FF8040"/><rect x="131" y="240" width="1" height="66" fill="#FF8040"/><rect x="131" y="305" width="44" height="1" fill="#FF8040"/><rect x="174" y="243" width="1" height="63" fill="#FF8040"/><rect x="174" y="240" width="7" height="2" fill="#FF8040"/><rect x="180" y="240" width="1" height="66" fill="#FF8040"/><rect x="180" y="305" width="14" height="1" fill="#FF8040"/><rect x="193" y="243" width="1" height="63" fill="#FF8040"/><rect x="193" y="240" width="7" height="2" fill="#FF8040"/><rect x="199" y="240" width="1" height="66" fill="#FF8040"/><rect x="199" y="305" width="25" height="1" fill="#FF8040"/><rect x="223" y="243" width="1" height="63" fill="#FF8040"/><rect x="223" y="240" width="7" height="2" fill="#FF8040"/><rect x="229" y="240" width="1" height="66" fill="#FF8040"/><rect x="229" y="305" width="7" height="1" fill="#FF8040"/><rect x="235" y="243" width="1" height="63" fill="#FF8040"/><rect x="235" y="240" width="7" height="2" fill="#FF8040"/><rect x="241" y="240" width="1" height="66" fill="#FF8040"/><rect x="241" y="305" width="32" height="1" fill="#FF8040"/><rect x="272" y="243" width="1" height="63" fill="#FF8040"/><rect x="272" y="240" width="7" height="2" fill="#FF8040"/><rect x="278" y="240" width="1" height="66" fill="#FF8040"/><rect x="278" y="305" width="7" height="1" fill="#FF8040"/><rect x="284" y="243" width="1" height="63" fill="#FF8040"/><rect x="284" y="240" width="13" height="2" fill="#FF8040"/><rect x="296" y="240" width="1" height="66" fill="#FF8040"/><rect x="296" y="305" width="26" height="1" fill="#FF8040"/><rect x="321" y="243" width="1" height="63" fill="#FF8040"/><rect x="321" y="240" width="13" height="2" fill="#FF8040"/><rect x="333" y="240" width="1" height="66" fill="#FF8040"/><rect x="333" y="305" width="38" height="1" fill="#FF8040"/><rect x="370" y="243" width="1" height="63" fill="#FF8040"/><rect x="370" y="240" width="12" height="2" fill="#FF8040"/><rect x="381" y="240" width="1" height="66" fill="#FF8040"/><rect x="381" y="305" width="6" height="1" fill="#FF8040"/><rect x="386" y="243" width="1" height="63" fill="#FF8040"/><rect x="386" y="240" width="8" height="2" fill="#FF8040"/><rect x="393" y="240" width="1" height="66" fill="#FF8040"/><rect x="393" y="305" width="26" height="1" fill="#FF8040"/><rect x="418" y="243" width="1" height="63" fill="#FF8040"/><rect x="418" y="240" width="18" height="2" fill="#FF8040"/><rect x="435" y="240" width="1" height="66" fill="#FF8040"/><rect x="435" y="305" width="33" height="1" fill="#FF8040"/><rect x="467" y="243" width="1" height="63" fill="#FF8040"/><rect x="467" y="240" width="25" height="2" fill="#FF8040"/><rect x="491" y="240" width="1" height="66" fill="#FF8040"/><rect x="491" y="305" width="19" height="1" fill="#FF8040"/><rect x="509" y="243" width="1" height="63" fill="#FF8040"/><rect x="509" y="240" width="7" height="2" fill="#FF8040"/><rect x="515" y="240" width="1" height="66" fill="#FF8040"/><rect x="515" y="305" width="44" height="1" fill="#FF8040"/><rect x="558" y="243" width="1" height="63" fill="#FF8040"/><rect x="558" y="240" width="6" height="2" fill="#FF8040"/><rect x="563" y="240" width="1" height="66" fill="#FF8040"/><rect x="563" y="305" width="20" height="1" fill="#FF8040"/><rect x="582" y="243" width="1" height="63" fill="#FF8040"/><rect x="582" y="240" width="7" height="2" fill="#FF8040"/><rect x="588" y="240" width="1" height="66" fill="#FF8040"/><rect x="588" y="305" width="20" height="1" fill="#FF8040"/><rect x="607" y="243" width="1" height="63" fill="#FF8040"/><rect x="607" y="240" width="6" height="2" fill="#FF8040"/><rect x="612" y="240" width="1" height="66" fill="#FF8040"/><rect x="612" y="305" width="14" height="1" fill="#FF8040"/><rect x="625" y="243" width="1" height="63" fill="#FF8040"/><rect x="625" y="240" width="6" height="2" fill="#FF8040"/><rect x="630" y="240" width="1" height="66" fill="#FF8040"/><rect x="630" y="305" width="26" height="1" fill="#FF8040"/><rect x="655" y="243" width="1" height="63" fill="#FF8040"/><rect x="655" y="240" width="7" height="2" fill="#FF8040"/><rect x="661" y="240" width="1" height="66" fill="#FF8040"/><rect x="661" y="305" width="14" height="1" fill="#FF8040"/><rect x="674" y="243" width="1" height="63" fill="#FF8040"/><rect x="674" y="240" width="13" height="2" fill="#FF8040"/><rect x="686" y="240" width="1" height="66" fill="#FF8040"/><rect x="686" y="305" width="19" height="1" fill="#FF8040"/><rect x="704" y="243" width="1" height="63" fill="#FF8040"/><rect x="704" y="240" width="7" height="2" fill="#FF8040"/><rect x="710" y="240" width="1" height="66" fill="#FF8040"/><rect x="710" y="305" width="7" height="1" fill="#FF8040"/><rect x="716" y="243" width="1" height="63" fill="#FF8040"/><rect x="716" y="240" width="7" height="2" fill="#FF8040"/><rect x="722" y="240" width="1" height="66" fill="#FF8040"/><rect x="722" y="305" width="31" height="1" fill="#FF8040"/><rect x="752" y="243" width="1" height="63" fill="#FF8040"/><rect x="752" y="240" width="7" height="2" fill="#FF8040"/><rect x="758" y="240" width="1" height="66" fill="#FF8040"/><rect x="758" y="305" width="1" height="1" fill="#FF8040"/><rect x="1" y="31" width="2" height="66" fill="#000"/><rect x="1" y="33" width="1" height="6" fill="#5AA6CB"/><rect x="1" y="58" width="1" height="10" fill="#5AA6CB"/><rect x="1" y="89" width="1" height="5" fill="#5AA6CB"/><rect x="0" y="28" width="1" height="301" fill="#F00"/></svg>
<div style="position:absolute;left:247px;top:138px;width:759px;height:329px;overflow:hidden">
<div style="position:absolute;left:2.8px;top:54px;width:100px;text-align:center;color:#fff;font-family:'Liberation Serif',serif;font-size:17px;line-height:17px;transform:scaleX(0.92)">0X0C0E</div>
<div style="position:absolute;left:100.0px;top:54px;width:100px;text-align:center;color:#fff;font-family:'Liberation Serif',serif;font-size:17px;line-height:17px;transform:scaleX(0.92)">0X1012</div>
<div style="position:absolute;left:197.4px;top:54px;width:100px;text-align:center;color:#fff;font-family:'Liberation Serif',serif;font-size:17px;line-height:17px;transform:scaleX(0.92)">0X1416</div>
<div style="position:absolute;left:294.6px;top:54px;width:100px;text-align:center;color:#fff;font-family:'Liberation Serif',serif;font-size:17px;line-height:17px;transform:scaleX(0.92)">0X181A</div>
<div style="position:absolute;left:391.9px;top:54px;width:100px;text-align:center;color:#fff;font-family:'Liberation Serif',serif;font-size:17px;line-height:17px;transform:scaleX(0.92)">0X1C1E</div>
<div style="position:absolute;left:489.2px;top:54px;width:100px;text-align:center;color:#fff;font-family:'Liberation Serif',serif;font-size:17px;line-height:17px;transform:scaleX(0.92)">0X2022</div>
<div style="position:absolute;left:586.5px;top:54px;width:100px;text-align:center;color:#fff;font-family:'Liberation Serif',serif;font-size:17px;line-height:17px;transform:scaleX(0.92)">0X2426</div>
<div style="position:absolute;left:672.6px;top:54px;width:100px;text-align:center;color:#fff;font-family:'Liberation Serif',serif;font-size:17px;line-height:17px;transform:scaleX(0.92)">0X282A</div>
<div style="position:absolute;left:-2.2px;top:138px;width:100px;text-align:center;color:#000;font-family:'Liberation Serif',serif;font-size:16px;line-height:16px">23.56us</div>
<div style="position:absolute;left:95.0px;top:138px;width:100px;text-align:center;color:#000;font-family:'Liberation Serif',serif;font-size:16px;line-height:16px">23.555us</div>
<div style="position:absolute;left:192.4px;top:138px;width:100px;text-align:center;color:#000;font-family:'Liberation Serif',serif;font-size:16px;line-height:16px">23.535us</div>
<div style="position:absolute;left:289.6px;top:138px;width:100px;text-align:center;color:#000;font-family:'Liberation Serif',serif;font-size:16px;line-height:16px">23.535us</div>
<div style="position:absolute;left:386.9px;top:138px;width:100px;text-align:center;color:#000;font-family:'Liberation Serif',serif;font-size:16px;line-height:16px">23.535us</div>
<div style="position:absolute;left:484.2px;top:138px;width:100px;text-align:center;color:#000;font-family:'Liberation Serif',serif;font-size:16px;line-height:16px">23.555us</div>
<div style="position:absolute;left:581.5px;top:138px;width:100px;text-align:center;color:#000;font-family:'Liberation Serif',serif;font-size:16px;line-height:16px">23.56us</div>
<div style="position:absolute;left:678.8px;top:138px;width:100px;text-align:center;color:#000;font-family:'Liberation Serif',serif;font-size:16px;line-height:16px">23.56us</div>
</div>
<div style="position:absolute;left:243px;top:266px;width:4px;height:15px;background:#B8C0D0"></div>
<svg style="position:absolute;left:243px;top:269px;shape-rendering:auto" width="4" height="9" viewBox="0 0 4 9" shape-rendering="crispEdges"><path d="M4 0v9L0 4.5z" fill="#000"/></svg>
<div style="position:absolute;left:0px;top:467px;width:120px;height:17px;background:linear-gradient(#F3F1EC,#FEFEFB 60%,#F0EEE8)"></div>
<div style="position:absolute;left:1px;top:467px;width:16px;height:17px;box-sizing:border-box;border:1px solid #fff;border-radius:2px;background:linear-gradient(135deg,#D8E4FF,#BCCEF8 60%,#B0C4F4);box-shadow:inset -1px -1px 0 #9FB5E8"></div>
<svg style="position:absolute;left:6px;top:471px;shape-rendering:auto" width="6" height="8" viewBox="0 0 6 8" shape-rendering="crispEdges"><path d="M5 0.5L1.5 4 5 7.5" stroke="#4D6185" stroke-width="2" fill="none"/></svg>
<div style="position:absolute;left:103px;top:467px;width:16px;height:17px;box-sizing:border-box;border:1px solid #fff;border-radius:2px;background:linear-gradient(135deg,#D8E4FF,#BCCEF8 60%,#B0C4F4);box-shadow:inset -1px -1px 0 #9FB5E8"></div>
<svg style="position:absolute;left:108px;top:471px;shape-rendering:auto" width="6" height="8" viewBox="0 0 6 8" shape-rendering="crispEdges"><path d="M1 0.5L4.5 4 1 7.5" stroke="#4D6185" stroke-width="2" fill="none"/></svg>
<div style="position:absolute;left:19px;top:467px;width:82px;height:17px;box-sizing:border-box;border:1px solid #fff;border-radius:2px;background:linear-gradient(#CFDCFD,#C2D3FC 50%,#B8CBF8);box-shadow:inset -1px -1px 0 #A8BEF0"></div>
<svg style="position:absolute;left:57px;top:472px;" width="7" height="6" viewBox="0 0 7 6" shape-rendering="crispEdges"><path d="M0.5 0v6M2.5 0v6M4.5 0v6M6.5 0v6" stroke="#fff"/></svg>
<div style="position:absolute;left:123px;top:467px;width:59px;height:17px;background:linear-gradient(#F3F1EC,#FEFEFB 60%,#F0EEE8)"></div>
<div style="position:absolute;left:124px;top:467px;width:16px;height:17px;box-sizing:border-box;border:1px solid #fff;border-radius:2px;background:linear-gradient(135deg,#D8E4FF,#BCCEF8 60%,#B0C4F4);box-shadow:inset -1px -1px 0 #9FB5E8"></div>
<svg style="position:absolute;left:129px;top:471px;shape-rendering:auto" width="6" height="8" viewBox="0 0 6 8" shape-rendering="crispEdges"><path d="M5 0.5L1.5 4 5 7.5" stroke="#4D6185" stroke-width="2" fill="none"/></svg>
<div style="position:absolute;left:165px;top:467px;width:16px;height:17px;box-sizing:border-box;border:1px solid #fff;border-radius:2px;background:linear-gradient(135deg,#D8E4FF,#BCCEF8 60%,#B0C4F4);box-shadow:inset -1px -1px 0 #9FB5E8"></div>
<svg style="position:absolute;left:170px;top:471px;shape-rendering:auto" width="6" height="8" viewBox="0 0 6 8" shape-rendering="crispEdges"><path d="M1 0.5L4.5 4 1 7.5" stroke="#4D6185" stroke-width="2" fill="none"/></svg>
<div style="position:absolute;left:142px;top:467px;width:16px;height:17px;box-sizing:border-box;border:1px solid #fff;border-radius:2px;background:linear-gradient(#CFDCFD,#C2D3FC 50%,#B8CBF8);box-shadow:inset -1px -1px 0 #A8BEF0"></div>
<svg style="position:absolute;left:147px;top:472px;" width="7" height="6" viewBox="0 0 7 6" shape-rendering="crispEdges"><path d="M0.5 0v6M2.5 0v6M4.5 0v6M6.5 0v6" stroke="#fff"/></svg>
<div style="position:absolute;left:187px;top:467px;width:55px;height:17px;background:linear-gradient(#F3F1EC,#FEFEFB 60%,#F0EEE8)"></div>
<div style="position:absolute;left:188px;top:467px;width:16px;height:17px;box-sizing:border-box;border:1px solid #fff;border-radius:2px;background:linear-gradient(135deg,#D8E4FF,#BCCEF8 60%,#B0C4F4);box-shadow:inset -1px -1px 0 #9FB5E8"></div>
<svg style="position:absolute;left:193px;top:471px;shape-rendering:auto" width="6" height="8" viewBox="0 0 6 8" shape-rendering="crispEdges"><path d="M5 0.5L1.5 4 5 7.5" stroke="#4D6185" stroke-width="2" fill="none"/></svg>
<div style="position:absolute;left:225px;top:467px;width:16px;height:17px;box-sizing:border-box;border:1px solid #fff;border-radius:2px;background:linear-gradient(135deg,#D8E4FF,#BCCEF8 60%,#B0C4F4);box-shadow:inset -1px -1px 0 #9FB5E8"></div>
<svg style="position:absolute;left:230px;top:471px;shape-rendering:auto" width="6" height="8" viewBox="0 0 6 8" shape-rendering="crispEdges"><path d="M1 0.5L4.5 4 1 7.5" stroke="#4D6185" stroke-width="2" fill="none"/></svg>
<div style="position:absolute;left:205px;top:467px;width:16px;height:17px;box-sizing:border-box;border:1px solid #fff;border-radius:2px;background:linear-gradient(#CFDCFD,#C2D3FC 50%,#B8CBF8);box-shadow:inset -1px -1px 0 #A8BEF0"></div>
<svg style="position:absolute;left:210px;top:472px;" width="7" height="6" viewBox="0 0 7 6" shape-rendering="crispEdges"><path d="M0.5 0v6M2.5 0v6M4.5 0v6M6.5 0v6" stroke="#fff"/></svg>
<div style="position:absolute;left:246px;top:467px;width:760px;height:17px;background:linear-gradient(#F3F1EC,#FEFEFB 60%,#F0EEE8)"></div>
<div style="position:absolute;left:247px;top:467px;width:16px;height:17px;box-sizing:border-box;border:1px solid #fff;border-radius:2px;background:linear-gradient(135deg,#D8E4FF,#BCCEF8 60%,#B0C4F4);box-shadow:inset -1px -1px 0 #9FB5E8"></div>
<svg style="position:absolute;left:252px;top:471px;shape-rendering:auto" width="6" height="8" viewBox="0 0 6 8" shape-rendering="crispEdges"><path d="M5 0.5L1.5 4 5 7.5" stroke="#4D6185" stroke-width="2" fill="none"/></svg>
<div style="position:absolute;left:989px;top:467px;width:16px;height:17px;box-sizing:border-box;border:1px solid #fff;border-radius:2px;background:linear-gradient(135deg,#D8E4FF,#BCCEF8 60%,#B0C4F4);box-shadow:inset -1px -1px 0 #9FB5E8"></div>
<svg style="position:absolute;left:994px;top:471px;shape-rendering:auto" width="6" height="8" viewBox="0 0 6 8" shape-rendering="crispEdges"><path d="M1 0.5L4.5 4 1 7.5" stroke="#4D6185" stroke-width="2" fill="none"/></svg>
<div style="position:absolute;left:355px;top:467px;width:7px;height:17px;box-sizing:border-box;border:1px solid #fff;border-radius:2px;background:linear-gradient(#CFDCFD,#C2D3FC 50%,#B8CBF8);box-shadow:inset -1px -1px 0 #A8BEF0"></div>
<div style="position:absolute;left:1006px;top:467px;width:17px;height:17px;background:#ECE9D8"></div>
<div style="position:absolute;left:0px;top:484px;width:1024px;height:1px;background:#ACA899"></div>
<div style="position:absolute;left:1006px;top:138px;width:17px;height:329px;background:linear-gradient(90deg,#F3F1EC,#FEFEFB 60%,#F0EEE8)"></div>
<div style="position:absolute;left:1006px;top:138px;width:17px;height:16px;box-sizing:border-box;border:1px solid #fff;border-radius:2px;background:linear-gradient(135deg,#D8E4FF,#BCCEF8 60%,#B0C4F4);box-shadow:inset -1px -1px 0 #9FB5E8"></div>
<svg style="position:absolute;left:1010px;top:143px;shape-rendering:auto" width="8" height="6" viewBox="0 0 8 6" shape-rendering="crispEdges"><path d="M0.5 5L4 1.5 7.5 5" stroke="#4D6185" stroke-width="2" fill="none"/></svg>
<div style="position:absolute;left:1006px;top:155px;width:17px;height:35px;box-sizing:border-box;border:1px solid #fff;border-radius:2px;background:linear-gradient(90deg,#CFDCFD,#C2D3FC 50%,#B8CBF8);box-shadow:inset -1px -1px 0 #A8BEF0"></div>
<svg style="position:absolute;left:1011px;top:169px;" width="7" height="7" viewBox="0 0 7 7" shape-rendering="crispEdges"><path d="M0 0.5h7M0 2.5h7M0 4.5h7M0 6.5h7" stroke="#fff"/></svg>
<div style="position:absolute;left:1006px;top:451px;width:17px;height:16px;box-sizing:border-box;border:1px solid #fff;border-radius:2px;background:linear-gradient(135deg,#D8E4FF,#BCCEF8 60%,#B0C4F4);box-shadow:inset -1px -1px 0 #9FB5E8"></div>
<svg style="position:absolute;left:1010px;top:456px;shape-rendering:auto" width="8" height="6" viewBox="0 0 8 6" shape-rendering="crispEdges"><path d="M0.5 1L4 4.5 7.5 1" stroke="#4D6185" stroke-width="2" fill="none"/></svg>
<div style="position:absolute;left:243px;top:137px;width:781px;height:1px;background:#ACA899"></div>
<div style="position:absolute;left:1023px;top:137px;width:1px;height:348px;background:#ACA899"></div>
<svg style="position:absolute;left:4px;top:491px;shape-rendering:auto" width="7" height="7" viewBox="0 0 7 7" shape-rendering="crispEdges"><path d="M0.5 0.5L6 6M6 0.5L0.5 6" stroke="#000" stroke-width="1.5"/></svg>
<div style="position:absolute;left:4px;top:503px;width:2px;height:243px;background:#fff;border-right:1px solid #ACA899"></div>
<div style="position:absolute;left:8px;top:503px;width:2px;height:243px;background:#fff;border-right:1px solid #ACA899"></div>
<div style="position:absolute;left:21px;top:488px;width:57px;height:21px;box-sizing:border-box;border:1px solid #A0A090;border-radius:3px;background:linear-gradient(#FFFFFF,#F4F3EE 40%,#ECEBE6 80%,#D6D0C5);box-shadow:inset -1px -1px 0 #C8C4B4;outline:0"></div>
<div style="position:absolute;left:21px;top:491px;white-space:nowrap;width:57px;text-align:center;font-size:12px;line-height:15px">設定...</div>
<div style="position:absolute;left:84px;top:488px;width:57px;height:21px;box-sizing:border-box;border:1px solid #000;border-radius:3px;background:linear-gradient(#FFFFFF,#F4F3EE 40%,#ECEBE6 80%,#D6D0C5);box-shadow:inset -1px -1px 0 #C8C4B4;box-shadow:inset 0 0 0 1px #777, inset -2px -2px 0 #999"></div>
<div style="position:absolute;left:84px;top:491px;white-space:nowrap;width:57px;text-align:center;font-size:12px;line-height:15px">刷新</div>
<div style="position:absolute;left:147px;top:488px;width:57px;height:21px;box-sizing:border-box;border:1px solid #A0A090;border-radius:3px;background:linear-gradient(#FFFFFF,#F4F3EE 40%,#ECEBE6 80%,#D6D0C5);box-shadow:inset -1px -1px 0 #C8C4B4;outline:0"></div>
<div style="position:absolute;left:147px;top:491px;white-space:nowrap;width:57px;text-align:center;font-size:12px;line-height:15px">匯出...</div>
<div style="position:absolute;left:210px;top:488px;width:123px;height:21px;box-sizing:border-box;border:1px solid #A0A090;border-radius:3px;background:linear-gradient(#FFFFFF,#F4F3EE 40%,#ECEBE6 80%,#D6D0C5);box-shadow:inset -1px -1px 0 #C8C4B4;outline:0"></div>
<div style="position:absolute;left:210px;top:491px;white-space:nowrap;width:123px;text-align:center;font-size:12px;line-height:15px">封包與波形同步設定</div>
<div style="position:absolute;left:17px;top:516px;width:984px;height:227px;background:#fff;border-top:1px solid #808080;border-left:1px solid #808080"></div>
<div style="position:absolute;left:1001px;top:516px;width:19px;height:227px;background:repeating-conic-gradient(#fff 0 25%,#ECE9D8 0 50%) 0 0/2px 2px"></div>
<div style="position:absolute;left:1001px;top:516px;width:19px;height:17px;box-sizing:border-box;border:1px solid;border-color:#F1EFE2 #716F64 #716F64 #F1EFE2;background:#ECE9D8;box-shadow:inset -1px -1px 0 #ACA899, inset 1px 1px 0 #fff"></div>
<svg style="position:absolute;left:1006px;top:522px;shape-rendering:auto" width="9" height="5" viewBox="0 0 9 5" shape-rendering="crispEdges"><path d="M0 5h9L4.5 0z"/></svg>
<div style="position:absolute;left:1001px;top:533px;width:19px;height:12px;box-sizing:border-box;border:1px solid;border-color:#F1EFE2 #716F64 #716F64 #F1EFE2;background:#ECE9D8;box-shadow:inset -1px -1px 0 #ACA899, inset 1px 1px 0 #fff"></div>
<div style="position:absolute;left:1001px;top:728px;width:19px;height:17px;box-sizing:border-box;border:1px solid;border-color:#F1EFE2 #716F64 #716F64 #F1EFE2;background:#ECE9D8;box-shadow:inset -1px -1px 0 #ACA899, inset 1px 1px 0 #fff"></div>
<svg style="position:absolute;left:1006px;top:734px;shape-rendering:auto" width="9" height="5" viewBox="0 0 9 5" shape-rendering="crispEdges"><path d="M0 0h9L4.5 5z"/></svg>
<div style="position:absolute;left:19px;top:518px;width:227px;height:36px;box-sizing:border-box;border:1px solid #000;background:#fff"></div>
<div style="position:absolute;left:20px;top:519px;width:225px;height:16px;background:#33449C"></div>
<div style="position:absolute;left:91px;top:518px;width:1px;height:36px;background:#000"></div>
<div style="position:absolute;left:173px;top:518px;width:1px;height:36px;background:#000"></div>
<div style="position:absolute;left:19px;top:535px;width:227px;height:1px;background:#000"></div>
<div style="position:absolute;left:19px;top:519px;white-space:nowrap;width:72px;text-align:center;color:#fff;font-size:15px;line-height:16px">封包 #</div>
<div style="position:absolute;left:19px;top:536px;white-space:nowrap;width:72px;text-align:center;font-size:13px;line-height:17px">1</div>
<div style="position:absolute;left:91px;top:519px;white-space:nowrap;width:82px;text-align:center;color:#fff;font-size:15px;line-height:16px">名稱</div>
<div style="position:absolute;left:91px;top:536px;white-space:nowrap;width:82px;text-align:center;font-size:13px;line-height:17px">Bus1(IIS)</div>
<div style="position:absolute;left:173px;top:519px;white-space:nowrap;width:73px;text-align:center;color:#fff;font-size:15px;line-height:16px">起始點</div>
<div style="position:absolute;left:173px;top:536px;white-space:nowrap;width:73px;text-align:center;font-size:13px;line-height:17px">0ns</div>
<div style="position:absolute;left:248px;top:518px;width:144px;height:36px;box-sizing:border-box;border:1px solid #000;background:#fff"></div>
<div style="position:absolute;left:249px;top:519px;width:71px;height:16px;background:#C48ABF"></div>
<div style="position:absolute;left:321px;top:519px;width:70px;height:16px;background:#5AA6CB"></div>
<div style="position:absolute;left:320px;top:518px;width:1px;height:36px;background:#000"></div>
<div style="position:absolute;left:248px;top:535px;width:144px;height:1px;background:#000"></div>
<div style="position:absolute;left:248px;top:519px;white-space:nowrap;width:72px;text-align:center;color:#F4E8F4;font-size:13px;line-height:16px">DATA-L</div>
<div style="position:absolute;left:320px;top:519px;white-space:nowrap;width:72px;text-align:center;color:#F0F8FF;font-size:13px;line-height:16px">DATA-R</div>
<div style="position:absolute;left:248px;top:536px;white-space:nowrap;width:72px;text-align:center;font-size:13px;line-height:17px">0X0406</div>
<div style="position:absolute;left:320px;top:536px;white-space:nowrap;width:72px;text-align:center;font-size:13px;line-height:17px">0X080A</div>
<div style="position:absolute;left:19px;top:556px;width:229px;height:36px;box-sizing:border-box;border:1px solid #000;background:#fff"></div>
<div style="position:absolute;left:20px;top:557px;width:227px;height:16px;background:#33449C"></div>
<div style="position:absolute;left:91px;top:556px;width:1px;height:36px;background:#000"></div>
<div style="position:absolute;left:173px;top:556px;width:1px;height:36px;background:#000"></div>
<div style="position:absolute;left:19px;top:573px;width:229px;height:1px;background:#000"></div>
<div style="position:absolute;left:19px;top:557px;white-space:nowrap;width:72px;text-align:center;color:#fff;font-size:15px;line-height:16px">封包 #</div>
<div style="position:absolute;left:19px;top:574px;white-space:nowrap;width:72px;text-align:center;font-size:13px;line-height:17px">2</div>
<div style="position:absolute;left:91px;top:557px;white-space:nowrap;width:82px;text-align:center;color:#fff;font-size:15px;line-height:16px">名稱</div>
<div style="position:absolute;left:91px;top:574px;white-space:nowrap;width:82px;text-align:center;font-size:13px;line-height:17px">Bus1(IIS)</div>
<div style="position:absolute;left:173px;top:557px;white-space:nowrap;width:75px;text-align:center;color:#fff;font-size:15px;line-height:16px">起始點</div>
<div style="position:absolute;left:173px;top:574px;white-space:nowrap;width:75px;text-align:center;font-size:13px;line-height:17px">47.135us</div>
<div style="position:absolute;left:250px;top:556px;width:144px;height:36px;box-sizing:border-box;border:1px solid #000;background:#fff"></div>
<div style="position:absolute;left:251px;top:557px;width:71px;height:16px;background:#C48ABF"></div>
<div style="position:absolute;left:323px;top:557px;width:70px;height:16px;background:#5AA6CB"></div>
<div style="position:absolute;left:322px;top:556px;width:1px;height:36px;background:#000"></div>
<div style="position:absolute;left:250px;top:573px;width:144px;height:1px;background:#000"></div>
<div style="position:absolute;left:250px;top:557px;white-space:nowrap;width:72px;text-align:center;color:#F4E8F4;font-size:13px;line-height:16px">DATA-L</div>
<div style="position:absolute;left:322px;top:557px;white-space:nowrap;width:72px;text-align:center;color:#F0F8FF;font-size:13px;line-height:16px">DATA-R</div>
<div style="position:absolute;left:250px;top:574px;white-space:nowrap;width:72px;text-align:center;font-size:13px;line-height:17px">0X0C0E</div>
<div style="position:absolute;left:322px;top:574px;white-space:nowrap;width:72px;text-align:center;font-size:13px;line-height:17px">0X1012</div>
<div style="position:absolute;left:19px;top:594px;width:221px;height:36px;box-sizing:border-box;border:1px solid #000;background:#fff"></div>
<div style="position:absolute;left:20px;top:595px;width:219px;height:16px;background:#33449C"></div>
<div style="position:absolute;left:91px;top:594px;width:1px;height:36px;background:#000"></div>
<div style="position:absolute;left:173px;top:594px;width:1px;height:36px;background:#000"></div>
<div style="position:absolute;left:19px;top:611px;width:221px;height:1px;background:#000"></div>
<div style="position:absolute;left:19px;top:595px;white-space:nowrap;width:72px;text-align:center;color:#fff;font-size:15px;line-height:16px">封包 #</div>
<div style="position:absolute;left:19px;top:612px;white-space:nowrap;width:72px;text-align:center;font-size:13px;line-height:17px">3</div>
<div style="position:absolute;left:91px;top:595px;white-space:nowrap;width:82px;text-align:center;color:#fff;font-size:15px;line-height:16px">名稱</div>
<div style="position:absolute;left:91px;top:612px;white-space:nowrap;width:82px;text-align:center;font-size:13px;line-height:17px">Bus1(IIS)</div>
<div style="position:absolute;left:173px;top:595px;white-space:nowrap;width:67px;text-align:center;color:#fff;font-size:15px;line-height:16px">起始點</div>
<div style="position:absolute;left:173px;top:612px;white-space:nowrap;width:67px;text-align:center;font-size:13px;line-height:17px">94.25us</div>
<div style="position:absolute;left:242px;top:594px;width:145px;height:36px;box-sizing:border-box;border:1px solid #000;background:#fff"></div>
<div style="position:absolute;left:243px;top:595px;width:71px;height:16px;background:#C48ABF"></div>
<div style="position:absolute;left:315px;top:595px;width:71px;height:16px;background:#5AA6CB"></div>
<div style="position:absolute;left:314px;top:594px;width:1px;height:36px;background:#000"></div>
<div style="position:absolute;left:242px;top:611px;width:145px;height:1px;background:#000"></div>
<div style="position:absolute;left:242px;top:595px;white-space:nowrap;width:72px;text-align:center;color:#F4E8F4;font-size:13px;line-height:16px">DATA-L</div>
<div style="position:absolute;left:314px;top:595px;white-space:nowrap;width:73px;text-align:center;color:#F0F8FF;font-size:13px;line-height:16px">DATA-R</div>
<div style="position:absolute;left:242px;top:612px;white-space:nowrap;width:72px;text-align:center;font-size:13px;line-height:17px">0X1416</div>
<div style="position:absolute;left:314px;top:612px;white-space:nowrap;width:73px;text-align:center;font-size:13px;line-height:17px">0X181A</div>
<div style="position:absolute;left:19px;top:632px;width:229px;height:36px;box-sizing:border-box;border:1px solid #000;background:#fff"></div>
<div style="position:absolute;left:20px;top:633px;width:227px;height:16px;background:#33449C"></div>
<div style="position:absolute;left:91px;top:632px;width:1px;height:36px;background:#000"></div>
<div style="position:absolute;left:173px;top:632px;width:1px;height:36px;background:#000"></div>
<div style="position:absolute;left:19px;top:649px;width:229px;height:1px;background:#000"></div>
<div style="position:absolute;left:19px;top:633px;white-space:nowrap;width:72px;text-align:center;color:#fff;font-size:15px;line-height:16px">封包 #</div>
<div style="position:absolute;left:19px;top:650px;white-space:nowrap;width:72px;text-align:center;font-size:13px;line-height:17px">4</div>
<div style="position:absolute;left:91px;top:633px;white-space:nowrap;width:82px;text-align:center;color:#fff;font-size:15px;line-height:16px">名稱</div>
<div style="position:absolute;left:91px;top:650px;white-space:nowrap;width:82px;text-align:center;font-size:13px;line-height:17px">Bus1(IIS)</div>
<div style="position:absolute;left:173px;top:633px;white-space:nowrap;width:75px;text-align:center;color:#fff;font-size:15px;line-height:16px">起始點</div>
<div style="position:absolute;left:173px;top:650px;white-space:nowrap;width:75px;text-align:center;font-size:13px;line-height:17px">141.32us</div>
<div style="position:absolute;left:250px;top:632px;width:144px;height:36px;box-sizing:border-box;border:1px solid #000;background:#fff"></div>
<div style="position:absolute;left:251px;top:633px;width:71px;height:16px;background:#C48ABF"></div>
<div style="position:absolute;left:323px;top:633px;width:70px;height:16px;background:#5AA6CB"></div>
<div style="position:absolute;left:322px;top:632px;width:1px;height:36px;background:#000"></div>
<div style="position:absolute;left:250px;top:649px;width:144px;height:1px;background:#000"></div>
<div style="position:absolute;left:250px;top:633px;white-space:nowrap;width:72px;text-align:center;color:#F4E8F4;font-size:13px;line-height:16px">DATA-L</div>
<div style="position:absolute;left:322px;top:633px;white-space:nowrap;width:72px;text-align:center;color:#F0F8FF;font-size:13px;line-height:16px">DATA-R</div>
<div style="position:absolute;left:250px;top:650px;white-space:nowrap;width:72px;text-align:center;font-size:13px;line-height:17px">0X1C1E</div>
<div style="position:absolute;left:322px;top:650px;white-space:nowrap;width:72px;text-align:center;font-size:13px;line-height:17px">0X2022</div>
<div style="position:absolute;left:19px;top:670px;width:229px;height:36px;box-sizing:border-box;border:1px solid #000;background:#fff"></div>
<div style="position:absolute;left:20px;top:671px;width:227px;height:16px;background:#33449C"></div>
<div style="position:absolute;left:91px;top:670px;width:1px;height:36px;background:#000"></div>
<div style="position:absolute;left:173px;top:670px;width:1px;height:36px;background:#000"></div>
<div style="position:absolute;left:19px;top:687px;width:229px;height:1px;background:#000"></div>
<div style="position:absolute;left:19px;top:671px;white-space:nowrap;width:72px;text-align:center;color:#fff;font-size:15px;line-height:16px">封包 #</div>
<div style="position:absolute;left:19px;top:688px;white-space:nowrap;width:72px;text-align:center;font-size:13px;line-height:17px">5</div>
<div style="position:absolute;left:91px;top:671px;white-space:nowrap;width:82px;text-align:center;color:#fff;font-size:15px;line-height:16px">名稱</div>
<div style="position:absolute;left:91px;top:688px;white-space:nowrap;width:82px;text-align:center;font-size:13px;line-height:17px">Bus1(IIS)</div>
<div style="position:absolute;left:173px;top:671px;white-space:nowrap;width:75px;text-align:center;color:#fff;font-size:15px;line-height:16px">起始點</div>
<div style="position:absolute;left:173px;top:688px;white-space:nowrap;width:75px;text-align:center;font-size:13px;line-height:17px">188.41us</div>
<div style="position:absolute;left:250px;top:670px;width:144px;height:36px;box-sizing:border-box;border:1px solid #000;background:#fff"></div>
<div style="position:absolute;left:251px;top:671px;width:71px;height:16px;background:#C48ABF"></div>
<div style="position:absolute;left:323px;top:671px;width:70px;height:16px;background:#5AA6CB"></div>
<div style="position:absolute;left:322px;top:670px;width:1px;height:36px;background:#000"></div>
<div style="position:absolute;left:250px;top:687px;width:144px;height:1px;background:#000"></div>
<div style="position:absolute;left:250px;top:671px;white-space:nowrap;width:72px;text-align:center;color:#F4E8F4;font-size:13px;line-height:16px">DATA-L</div>
<div style="position:absolute;left:322px;top:671px;white-space:nowrap;width:72px;text-align:center;color:#F0F8FF;font-size:13px;line-height:16px">DATA-R</div>
<div style="position:absolute;left:250px;top:688px;white-space:nowrap;width:72px;text-align:center;font-size:13px;line-height:17px">0X2426</div>
<div style="position:absolute;left:322px;top:688px;white-space:nowrap;width:72px;text-align:center;font-size:13px;line-height:17px">0X282A</div>
<div style="position:absolute;left:17px;top:516px;width:984px;height:227px;overflow:hidden">
</div>
<div style="position:absolute;left:19px;top:708px;width:229px;height:36px;box-sizing:border-box;border:1px solid #000;background:#fff"></div>
<div style="position:absolute;left:20px;top:709px;width:227px;height:16px;background:#33449C"></div>
<div style="position:absolute;left:91px;top:708px;width:1px;height:36px;background:#000"></div>
<div style="position:absolute;left:173px;top:708px;width:1px;height:36px;background:#000"></div>
<div style="position:absolute;left:19px;top:725px;width:229px;height:1px;background:#000"></div>
<div style="position:absolute;left:19px;top:709px;white-space:nowrap;width:72px;text-align:center;color:#fff;font-size:15px;line-height:16px">封包 #</div>
<div style="position:absolute;left:19px;top:726px;white-space:nowrap;width:72px;text-align:center;font-size:13px;line-height:17px">6</div>
<div style="position:absolute;left:91px;top:709px;white-space:nowrap;width:82px;text-align:center;color:#fff;font-size:15px;line-height:16px">名稱</div>
<div style="position:absolute;left:91px;top:726px;white-space:nowrap;width:82px;text-align:center;font-size:13px;line-height:17px">Bus1(IIS)</div>
<div style="position:absolute;left:173px;top:709px;white-space:nowrap;width:75px;text-align:center;color:#fff;font-size:15px;line-height:16px">起始點</div>
<div style="position:absolute;left:173px;top:726px;white-space:nowrap;width:75px;text-align:center;font-size:13px;line-height:17px">235.53us</div>
<div style="position:absolute;left:250px;top:708px;width:144px;height:36px;box-sizing:border-box;border:1px solid #000;background:#fff"></div>
<div style="position:absolute;left:251px;top:709px;width:71px;height:16px;background:#C48ABF"></div>
<div style="position:absolute;left:323px;top:709px;width:70px;height:16px;background:#5AA6CB"></div>
<div style="position:absolute;left:322px;top:708px;width:1px;height:36px;background:#000"></div>
<div style="position:absolute;left:250px;top:725px;width:144px;height:1px;background:#000"></div>
<div style="position:absolute;left:250px;top:709px;white-space:nowrap;width:72px;text-align:center;color:#F4E8F4;font-size:13px;line-height:16px">DATA-L</div>
<div style="position:absolute;left:322px;top:709px;white-space:nowrap;width:72px;text-align:center;color:#F0F8FF;font-size:13px;line-height:16px">DATA-R</div>
<div style="position:absolute;left:250px;top:726px;white-space:nowrap;width:72px;text-align:center;font-size:13px;line-height:17px">0X2C2E</div>
<div style="position:absolute;left:322px;top:726px;white-space:nowrap;width:72px;text-align:center;font-size:13px;line-height:17px">0X3032</div>
<svg style="position:absolute;left:19px;top:641px;shape-rendering:auto" width="8" height="16" viewBox="0 0 8 16" shape-rendering="crispEdges"><path d="M0 0L8 8 0 16z" fill="#F00"/></svg>
<div style="position:absolute;left:0px;top:742px;width:1001px;height:6px;background:#ECE9D8"></div>
<div style="position:absolute;left:0px;top:748px;width:1024px;height:1px;background:#ACA899"></div>
<div style="position:absolute;left:2px;top:751px;white-space:nowrap;font-size:12px;line-height:15px">就緒</div>
<div style="position:absolute;left:459px;top:752px;width:389px;height:14px;box-sizing:border-box;border:1px solid;border-color:#ACA899 #fff #fff #ACA899"></div>
<div style="position:absolute;left:851px;top:752px;width:65px;height:14px;box-sizing:border-box;border:1px solid;border-color:#ACA899 #fff #fff #ACA899"></div>
<div style="position:absolute;left:919px;top:752px;width:85px;height:14px;box-sizing:border-box;border:1px solid;border-color:#ACA899 #fff #fff #ACA899"></div>
<div style="position:absolute;left:853px;top:751px;white-space:nowrap;font-size:12px;line-height:15px">停止!</div>
<div style="position:absolute;left:921px;top:751px;white-space:nowrap;font-size:12px;line-height:15px">一般模式</div>
<div style="position:absolute;left:0px;top:766px;width:1024px;height:2px;background:#3A6EDC"></div>
</body></html>
